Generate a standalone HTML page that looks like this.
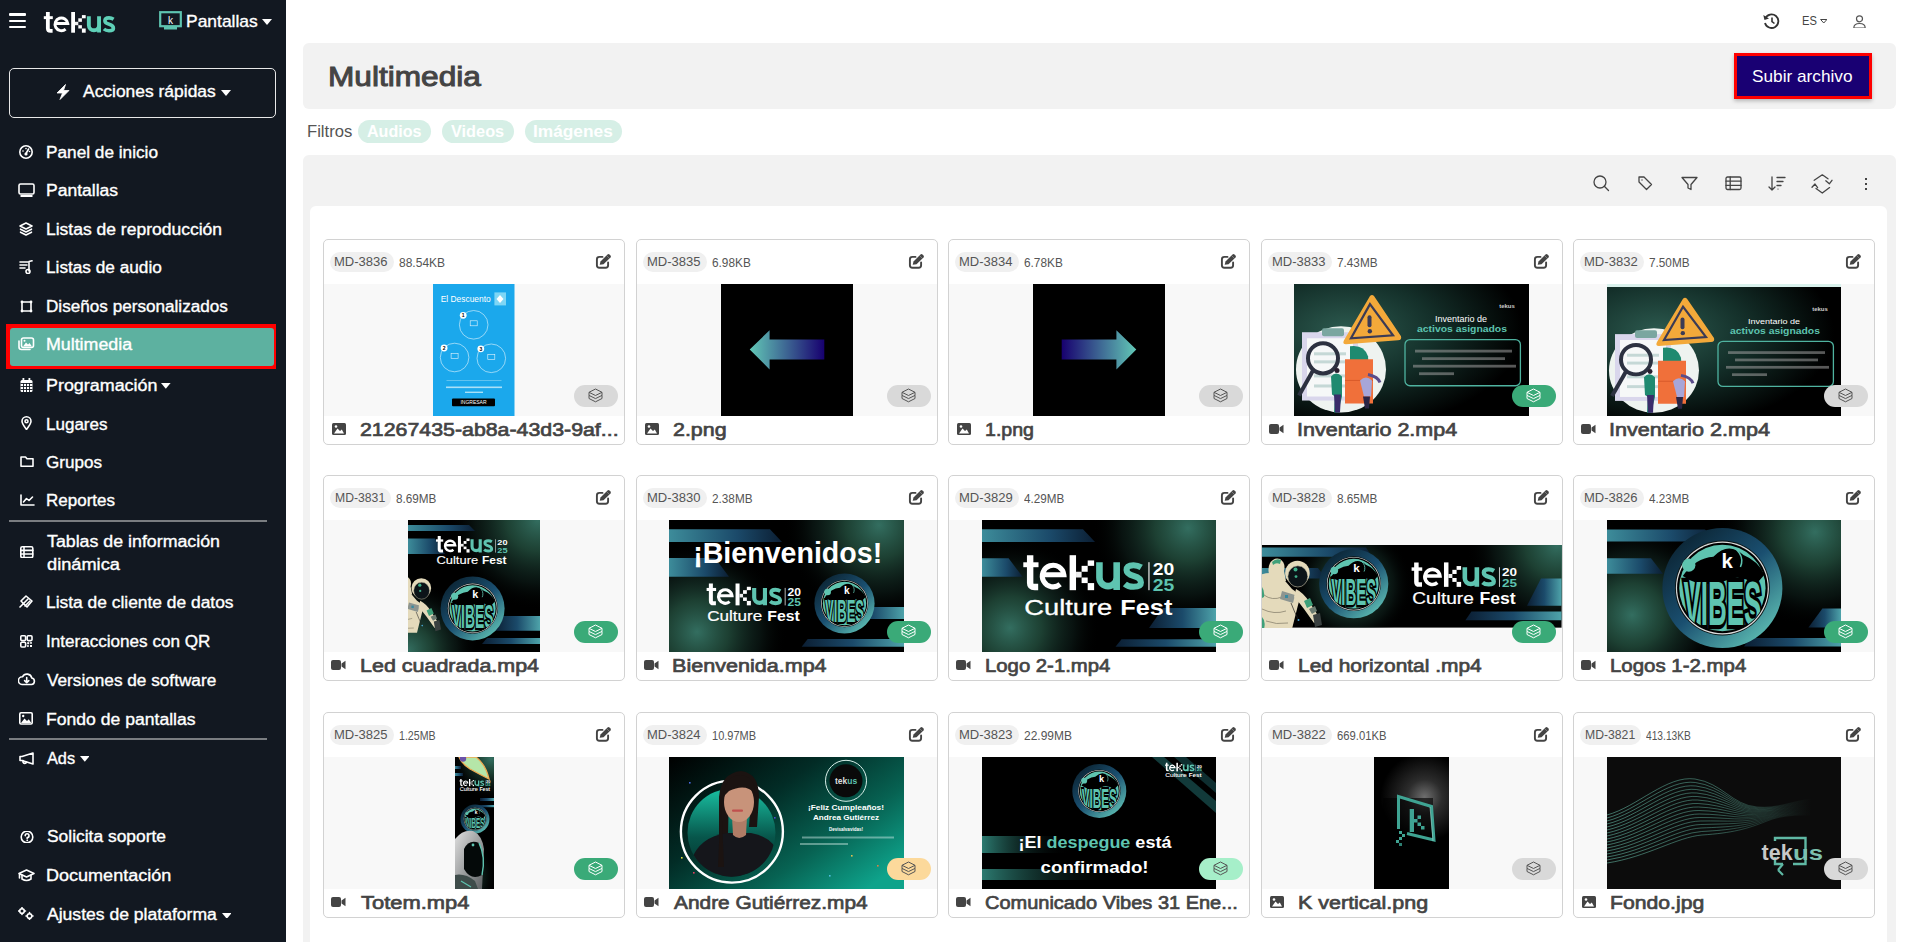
<!DOCTYPE html>
<html><head><meta charset="utf-8"><title>Multimedia</title>
<style>
html,body{margin:0;padding:0;width:1909px;height:942px;overflow:hidden;background:#fff;}
body{position:relative;font-family:"Liberation Sans",sans-serif;}
.t{position:absolute;line-height:1;white-space:nowrap;display:block;}
svg{display:block}
</style></head><body>
<div style="position:absolute;left:0px;top:0px;width:286px;height:942px;background:#121821"></div>
<div style="position:absolute;left:9px;top:13px;width:17px;height:2.6px;background:#fff;border-radius:1px"></div>
<div style="position:absolute;left:9px;top:19.5px;width:17px;height:2.6px;background:#fff;border-radius:1px"></div>
<div style="position:absolute;left:9px;top:25.5px;width:17px;height:2.6px;background:#fff;border-radius:1px"></div>
<svg style="position:absolute;left:40px;top:8px;" width="80" height="30" viewBox="0 0 80 30"><path d="M7.85 4 V20.5 Q7.85 22.8 10.5 22.8 H12.6" fill="none" stroke="#fff" stroke-width="3.8"/><rect x="3.8" y="8.2" width="9" height="2.9" fill="#fff"/><path d="M15.2 15.6 H27.8 A6.4 6.4 0 1 0 25.6 21.2" fill="none" stroke="#fff" stroke-width="3.0"/><rect x="31.2" y="4" width="3.8" height="20.7" fill="#fff"/><rect x="41.9" y="7.1" width="3.8" height="3.2" fill="#fff"/><rect x="38.3" y="10.3" width="3.6" height="3.5" fill="#fff"/><rect x="35" y="13.8" width="3.3" height="3.4" fill="#eee"/><rect x="38.3" y="17.2" width="3.6" height="3.3" fill="#fff"/><rect x="41.9" y="20.5" width="3.8" height="4.2" fill="#fff"/><path d="M48.85 8.2 V17.2 A5.1 5.1 0 0 0 59.05 17.2 M59.05 8.2 V24.6" fill="none" stroke="#5fd0b8" stroke-width="3.9"/><path d="M73.6 11.2 Q71.5 9.9 69 9.9 Q64.9 9.9 64.9 12.8 Q64.9 15.2 69.2 16.3 Q73.4 17.4 73.4 20.2 Q73.4 22.7 69 22.7 Q65.8 22.7 63.9 21" fill="none" stroke="#5fd0b8" stroke-width="3.6"/></svg>
<svg style="position:absolute;left:159px;top:11px;" width="23" height="19" viewBox="0 0 23 19"><rect x="1.2" y="1.2" width="20.6" height="14" fill="none" stroke="#5ec4b0" stroke-width="2.2"/><rect x="5" y="16" width="13" height="2.5" fill="#5ec4b0"/><text x="11.5" y="12.5" font-size="10" fill="#fff" text-anchor="middle" font-family="Liberation Sans">k</text></svg>
<span class="t" style="left:185.78px;top:13.00px;font-size:17.01px;color:#fff;font-weight:normal;transform:scaleX(1.0267);transform-origin:0 0;-webkit-text-stroke:0.35px #fff;">Pantallas</span>
<svg style="position:absolute;left:262px;top:19px;" width="10" height="6" viewBox="0 0 10 6"><path d="M0 0H10L5 6Z" fill="#fff"/></svg>
<div style="position:absolute;left:9px;top:68px;width:265px;height:48px;border:1.3px solid #e8e8e8;border-radius:5px"></div>
<svg style="position:absolute;left:56px;top:84px;" width="14" height="16" viewBox="0 0 14 16"><path d="M9.5 0.5 L1 9 H6.5 L4 15.5 L13 6.5 H7.5 Z" fill="#fff" stroke="#fff" stroke-width="0.8" stroke-linejoin="round"/></svg>
<span class="t" style="left:83.49px;top:83.33px;font-size:16.13px;color:#fff;font-weight:normal;transform:scaleX(1.0820);transform-origin:0 0;-webkit-text-stroke:0.35px #fff;">Acciones rápidas</span>
<svg style="position:absolute;left:221px;top:90px;" width="10" height="6" viewBox="0 0 10 6"><path d="M0 0H10L5 6Z" fill="#fff"/></svg>
<div style="position:absolute;left:6px;top:324px;width:270px;height:44.5px;background:#ff0000"></div>
<div style="position:absolute;left:9.5px;top:327.5px;width:264px;height:38px;background:#5db1a0;border-radius:3px"></div>
<span class="t" style="left:45.91px;top:145.10px;font-size:16.00px;color:#fff;font-weight:normal;transform:scaleX(1.0760);transform-origin:0 0;-webkit-text-stroke:0.35px #fff;">Panel de inicio</span>
<svg style="position:absolute;left:19.3px;top:145px;" width="14" height="14" viewBox="0 0 14 14"><circle cx="7" cy="7" r="6.2" fill="none" stroke="#fff" stroke-width="1.6" stroke-linecap="round" stroke-linejoin="round"/><path d="M7 8.5 L9.6 4" fill="none" stroke="#fff" stroke-width="1.6" stroke-linecap="round" stroke-linejoin="round"/><circle cx="7" cy="9" r="1.6" fill="#fff"/><circle cx="4" cy="6" r="0.8" fill="#fff"/><circle cx="7" cy="3.6" r="0.8" fill="#fff"/><circle cx="10.5" cy="6.5" r="0.8" fill="#fff"/></svg>
<span class="t" style="left:45.89px;top:183.00px;font-size:16.00px;color:#fff;font-weight:normal;transform:scaleX(1.0956);transform-origin:0 0;-webkit-text-stroke:0.35px #fff;">Pantallas</span>
<svg style="position:absolute;left:18px;top:183px;" width="17" height="14" viewBox="0 0 17 14"><rect x="1" y="1" width="15" height="10" rx="1.5" fill="none" stroke="#fff" stroke-width="1.6" stroke-linecap="round" stroke-linejoin="round"/><rect x="2.5" y="12" width="12" height="2" fill="#fff"/></svg>
<span class="t" style="left:45.89px;top:222.10px;font-size:16.00px;color:#fff;font-weight:normal;transform:scaleX(1.0932);transform-origin:0 0;-webkit-text-stroke:0.35px #fff;">Listas de reproducción</span>
<svg style="position:absolute;left:19.3px;top:222px;" width="14" height="14" viewBox="0 0 14 14"><path d="M7 1 L13 4 L7 7 L1 4 Z" fill="none" stroke="#fff" stroke-width="1.6" stroke-linecap="round" stroke-linejoin="round"/><path d="M1.5 7.2 L7 10 L12.5 7.2" fill="none" stroke="#fff" stroke-width="1.6" stroke-linecap="round" stroke-linejoin="round"/><path d="M1.5 10.2 L7 13 L12.5 10.2" fill="none" stroke="#fff" stroke-width="1.6" stroke-linecap="round" stroke-linejoin="round"/></svg>
<span class="t" style="left:45.91px;top:260.40px;font-size:16.00px;color:#fff;font-weight:normal;transform:scaleX(1.0761);transform-origin:0 0;-webkit-text-stroke:0.35px #fff;">Listas de audio</span>
<svg style="position:absolute;left:19.2px;top:260px;" width="14" height="14" viewBox="0 0 14 14"><path d="M1 2H9M1 5H8M1 8H6" fill="none" stroke="#fff" stroke-width="1.6" stroke-linecap="round" stroke-linejoin="round"/><path d="M10 11V1.5 L13 0.8" fill="none" stroke="#fff" stroke-width="1.6" stroke-linecap="round" stroke-linejoin="round"/><circle cx="9" cy="11.5" r="2" fill="none" stroke="#fff" stroke-width="1.6" stroke-linecap="round" stroke-linejoin="round"/></svg>
<span class="t" style="left:45.92px;top:299.30px;font-size:16.00px;color:#fff;font-weight:normal;transform:scaleX(1.0705);transform-origin:0 0;-webkit-text-stroke:0.35px #fff;">Diseños personalizados</span>
<svg style="position:absolute;left:19.5px;top:299.5px;" width="13" height="13" viewBox="0 0 13 13"><rect x="2" y="2" width="9" height="9" fill="none" stroke="#fff" stroke-width="1.6" stroke-linecap="round" stroke-linejoin="round"/><circle cx="2" cy="2" r="1.4" fill="#fff"/><circle cx="11" cy="2" r="1.4" fill="#fff"/><circle cx="2" cy="11" r="1.4" fill="#fff"/><circle cx="11" cy="11" r="1.4" fill="#fff"/></svg>
<span class="t" style="left:45.87px;top:337.00px;font-size:16.00px;color:#fff;font-weight:normal;transform:scaleX(1.1123);transform-origin:0 0;-webkit-text-stroke:0.35px #fff;">Multimedia</span>
<svg style="position:absolute;left:18px;top:337px;" width="17" height="14" viewBox="0 0 17 14"><path d="M1 4 V10 Q1 12.5 3.5 12.5 H12" fill="none" stroke="#fff" stroke-width="1.6" stroke-linecap="round" stroke-linejoin="round"/><rect x="3.5" y="1" width="12" height="9.5" rx="2" fill="none" stroke="#fff" stroke-width="1.6" stroke-linecap="round" stroke-linejoin="round"/><path d="M5 9.5 L8 5.5 L10 7.5 L11.5 6 L14 9.5Z" fill="#fff"/><circle cx="6.5" cy="3.8" r="1" fill="#fff"/></svg>
<span class="t" style="left:45.86px;top:378.30px;font-size:16.00px;color:#fff;font-weight:normal;transform:scaleX(1.1186);transform-origin:0 0;-webkit-text-stroke:0.35px #fff;">Programación</span>
<svg style="position:absolute;left:19.9px;top:378px;" width="13" height="14" viewBox="0 0 13 14"><rect x="0.5" y="2" width="12" height="12" rx="1.5" fill="#fff"/><rect x="2.5" y="0" width="1.8" height="3" fill="#fff"/><rect x="8.5" y="0" width="1.8" height="3" fill="#fff"/><path d="M0.5 5.5H12.5M0.5 8.5H12.5M0.5 11.5H12.5M3.5 5V14M6.5 5V14M9.5 5V14" stroke="#121821" stroke-width="0.9"/></svg>
<span class="t" style="left:45.93px;top:416.60px;font-size:16.00px;color:#fff;font-weight:normal;transform:scaleX(1.0630);transform-origin:0 0;-webkit-text-stroke:0.35px #fff;">Lugares</span>
<svg style="position:absolute;left:20.8px;top:416.2px;" width="11" height="14" viewBox="0 0 11 14"><path d="M5.5 13.5 C2 9 1 7.5 1 5.3 A4.5 4.5 0 0 1 10 5.3 C10 7.5 9 9 5.5 13.5Z" fill="none" stroke="#fff" stroke-width="1.6" stroke-linecap="round" stroke-linejoin="round"/><circle cx="5.5" cy="5.3" r="1.5" fill="none" stroke="#fff" stroke-width="1.6" stroke-linecap="round" stroke-linejoin="round"/></svg>
<span class="t" style="left:46.43px;top:454.80px;font-size:16.00px;color:#fff;font-weight:normal;transform:scaleX(1.0666);transform-origin:0 0;-webkit-text-stroke:0.35px #fff;">Grupos</span>
<svg style="position:absolute;left:19.6px;top:455px;" width="14" height="13" viewBox="0 0 14 13"><path d="M1 2 H5.5 L7 3.8 H13 V11.2 H1 Z" fill="none" stroke="#fff" stroke-width="1.6" stroke-linecap="round" stroke-linejoin="round"/></svg>
<span class="t" style="left:45.92px;top:493.10px;font-size:16.00px;color:#fff;font-weight:normal;transform:scaleX(1.0635);transform-origin:0 0;-webkit-text-stroke:0.35px #fff;">Reportes</span>
<svg style="position:absolute;left:19.6px;top:494px;" width="15" height="12" viewBox="0 0 15 12"><path d="M1 1V11H14" fill="none" stroke="#fff" stroke-width="1.6" stroke-linecap="round" stroke-linejoin="round"/><path d="M3.5 8 L6.5 4.5 L9 6.5 L12.5 3" fill="none" stroke="#fff" stroke-width="1.6" stroke-linecap="round" stroke-linejoin="round"/></svg>
<span class="t" style="left:46.94px;top:534.40px;font-size:16.00px;color:#fff;font-weight:normal;transform:scaleX(1.1114);transform-origin:0 0;-webkit-text-stroke:0.35px #fff;">Tablas de información</span>
<span class="t" style="left:46.57px;top:556.90px;font-size:16.00px;color:#fff;font-weight:normal;transform:scaleX(1.1381);transform-origin:0 0;-webkit-text-stroke:0.35px #fff;">dinámica</span>
<svg style="position:absolute;left:19.5px;top:545.8px;" width="14" height="12.5" viewBox="0 0 14 12.5"><rect x="0.8" y="0.8" width="12" height="10.8" rx="1.5" fill="none" stroke="#fff" stroke-width="1.6" stroke-linecap="round" stroke-linejoin="round"/><path d="M0.8 4.4H12.8M0.8 8H12.8M4 1V11.5" fill="none" stroke="#fff" stroke-width="1.6" stroke-linecap="round" stroke-linejoin="round"/></svg>
<span class="t" style="left:45.90px;top:595.30px;font-size:16.00px;color:#fff;font-weight:normal;transform:scaleX(1.0867);transform-origin:0 0;-webkit-text-stroke:0.35px #fff;">Lista de cliente de datos</span>
<svg style="position:absolute;left:19.3px;top:595.3px;" width="14" height="14" viewBox="0 0 14 14"><path d="M2 6 L7 1 L13 6 L8 12 Z" fill="none" stroke="#fff" stroke-width="1.6" stroke-linecap="round" stroke-linejoin="round"/><path d="M4 9 L9 4 M6 11 L11 6" fill="none" stroke="#fff" stroke-width="1.6" stroke-linecap="round" stroke-linejoin="round"/><path d="M1 12 L4 9" fill="none" stroke="#fff" stroke-width="1.6" stroke-linecap="round" stroke-linejoin="round"/></svg>
<span class="t" style="left:45.75px;top:634.40px;font-size:16.00px;color:#fff;font-weight:normal;transform:scaleX(1.0683);transform-origin:0 0;-webkit-text-stroke:0.35px #fff;">Interacciones con QR</span>
<svg style="position:absolute;left:19.9px;top:635.2px;" width="13" height="13" viewBox="0 0 13 13"><rect x="0.8" y="0.8" width="4.8" height="4.8" rx="1" fill="none" stroke="#fff" stroke-width="1.6" stroke-linecap="round" stroke-linejoin="round"/><rect x="7.2" y="0.8" width="4.8" height="4.8" rx="1" fill="none" stroke="#fff" stroke-width="1.6" stroke-linecap="round" stroke-linejoin="round"/><rect x="0.8" y="7.2" width="4.8" height="4.8" rx="1" fill="none" stroke="#fff" stroke-width="1.6" stroke-linecap="round" stroke-linejoin="round"/><rect x="7.2" y="7.2" width="2" height="2" fill="#fff"/><rect x="10" y="10" width="2" height="2" fill="#fff"/><rect x="7.2" y="10" width="1.5" height="2" fill="#fff"/><rect x="10" y="7.2" width="2" height="1.5" fill="#fff"/></svg>
<span class="t" style="left:47.29px;top:672.60px;font-size:16.00px;color:#fff;font-weight:normal;transform:scaleX(1.0748);transform-origin:0 0;-webkit-text-stroke:0.35px #fff;">Versiones de software</span>
<svg style="position:absolute;left:17.6px;top:673px;" width="18" height="13" viewBox="0 0 18 13"><path d="M4 11.5 H13.5 A3.3 3.3 0 0 0 13.8 5 A5 5 0 0 0 4.5 3.8 A3.8 3.8 0 0 0 4 11.5Z" fill="none" stroke="#fff" stroke-width="1.6" stroke-linecap="round" stroke-linejoin="round"/><path d="M8.7 4.5V9.5M6.6 7.6L8.7 9.7L10.8 7.6" fill="none" stroke="#fff" stroke-width="1.6" stroke-linecap="round" stroke-linejoin="round"/></svg>
<span class="t" style="left:45.89px;top:711.70px;font-size:16.00px;color:#fff;font-weight:normal;transform:scaleX(1.0989);transform-origin:0 0;-webkit-text-stroke:0.35px #fff;">Fondo de pantallas</span>
<svg style="position:absolute;left:19.3px;top:711.6px;" width="14" height="13" viewBox="0 0 14 13"><rect x="0.8" y="0.8" width="12.4" height="11.2" rx="1.2" fill="none" stroke="#fff" stroke-width="1.6" stroke-linecap="round" stroke-linejoin="round"/><path d="M2 11 L5.5 6.5 L8 9 L9.8 7.3 L12.3 11Z" fill="#fff"/><circle cx="4.2" cy="4" r="1.2" fill="#fff"/></svg>
<span class="t" style="left:47.28px;top:751.30px;font-size:16.00px;color:#fff;font-weight:normal;transform:scaleX(1.0186);transform-origin:0 0;-webkit-text-stroke:0.35px #fff;">Ads</span>
<svg style="position:absolute;left:18.5px;top:752px;" width="15" height="13" viewBox="0 0 15 13"><path d="M1 4.5 V8.5 H3 L14 12 V1 L3 4.5 Z" fill="none" stroke="#fff" stroke-width="1.6" stroke-linecap="round" stroke-linejoin="round"/><path d="M4 8.5 V10 A1.8 1.8 0 0 0 7.5 10" fill="none" stroke="#fff" stroke-width="1.6" stroke-linecap="round" stroke-linejoin="round"/></svg>
<span class="t" style="left:46.51px;top:829.30px;font-size:16.00px;color:#fff;font-weight:normal;transform:scaleX(1.0881);transform-origin:0 0;-webkit-text-stroke:0.35px #fff;">Solicita soporte</span>
<svg style="position:absolute;left:19.5px;top:830.5px;" width="14" height="12.5" viewBox="0 0 14 12.5"><circle cx="7" cy="6" r="5.8" fill="none" stroke="#fff" stroke-width="1.6" stroke-linecap="round" stroke-linejoin="round"/><path d="M5.2 4.6 A1.9 1.9 0 1 1 7.2 6.6 V7.6" fill="none" stroke="#fff" stroke-width="1.6" stroke-linecap="round" stroke-linejoin="round"/><circle cx="7.2" cy="9.3" r="0.9" fill="#fff"/></svg>
<span class="t" style="left:45.85px;top:868.40px;font-size:16.00px;color:#fff;font-weight:normal;transform:scaleX(1.1270);transform-origin:0 0;-webkit-text-stroke:0.35px #fff;">Documentación</span>
<svg style="position:absolute;left:18px;top:869px;" width="17" height="13" viewBox="0 0 17 13"><path d="M1 4.5 L8.5 1 L16 4.5 L8.5 8 Z" fill="none" stroke="#fff" stroke-width="1.6" stroke-linecap="round" stroke-linejoin="round"/><path d="M4 6 V10 Q8.5 13 13 10 V6" fill="none" stroke="#fff" stroke-width="1.6" stroke-linecap="round" stroke-linejoin="round"/><path d="M1.5 4.8 V9" fill="none" stroke="#fff" stroke-width="1.6" stroke-linecap="round" stroke-linejoin="round"/></svg>
<span class="t" style="left:47.29px;top:906.60px;font-size:16.00px;color:#fff;font-weight:normal;transform:scaleX(1.0970);transform-origin:0 0;-webkit-text-stroke:0.35px #fff;">Ajustes de plataforma</span>
<svg style="position:absolute;left:18px;top:907px;" width="16" height="13" viewBox="0 0 16 13"><circle cx="4" cy="4" r="2.3" fill="none" stroke="#fff" stroke-width="1.6" stroke-linecap="round" stroke-linejoin="round"/><circle cx="11.5" cy="9" r="2.3" fill="none" stroke="#fff" stroke-width="1.6" stroke-linecap="round" stroke-linejoin="round"/><path d="M4 0.5V1.5M4 6.5V7.5M0.5 4H1.5M6.5 4H7.5M11.5 5.5V6.5M11.5 11.5V12.5M8 9H9M14 9H15" fill="none" stroke="#fff" stroke-width="1.6" stroke-linecap="round" stroke-linejoin="round"/></svg>
<svg style="position:absolute;left:161.2px;top:383.2px;" width="9.6" height="5.8" viewBox="0 0 9.6 5.8"><path d="M0 0H9.6L4.8 5.8Z" fill="#fff"/></svg>
<svg style="position:absolute;left:79.7px;top:756px;" width="9.6" height="5.8" viewBox="0 0 9.6 5.8"><path d="M0 0H9.6L4.8 5.8Z" fill="#fff"/></svg>
<svg style="position:absolute;left:221.5px;top:912.5px;" width="9.6" height="5.8" viewBox="0 0 9.6 5.8"><path d="M0 0H9.6L4.8 5.8Z" fill="#fff"/></svg>
<div style="position:absolute;left:9px;top:520px;width:258px;height:2px;background:#7a7d81"></div>
<div style="position:absolute;left:9px;top:738px;width:258px;height:2px;background:#7a7d81"></div>
<svg style="position:absolute;left:1763px;top:12.5px;" width="17" height="16" viewBox="0 0 17 16"><path d="M2.3 5.5 A6.8 6.8 0 1 1 2 10" fill="none" stroke="#333" stroke-width="1.8"/><path d="M0.3 2 L1.5 7 L6 5.5Z" fill="#333"/><path d="M9 4.5V8.5L11.5 10.5" fill="none" stroke="#333" stroke-width="1.6"/></svg>
<span class="t" style="left:1802.11px;top:14.47px;font-size:13.66px;color:#444;font-weight:normal;transform:scaleX(0.8166);transform-origin:0 0;">ES</span>
<svg style="position:absolute;left:1819.5px;top:19px;" width="7.5" height="4.5" viewBox="0 0 7.5 4.5"><path d="M0.6 0.5H6.9L3.75 4Z" fill="none" stroke="#444" stroke-width="1"/></svg>
<svg style="position:absolute;left:1853px;top:14.5px;" width="13" height="13.5" viewBox="0 0 13 13.5"><circle cx="6.5" cy="3.8" r="3" fill="none" stroke="#555" stroke-width="1.2"/><path d="M0.8 13 Q0.8 8.5 6.5 8.5 Q12.2 8.5 12.2 13Z" fill="none" stroke="#555" stroke-width="1.2"/></svg>
<div style="position:absolute;left:303px;top:43px;width:1593px;height:65.5px;background:#f2f2f2;border-radius:6px"></div>
<span class="t" style="left:328.34px;top:62.62px;font-size:27.76px;color:#444;font-weight:normal;transform:scaleX(1.1394);transform-origin:0 0;-webkit-text-stroke:1.00px #444;">Multimedia</span>
<div style="position:absolute;left:1733.5px;top:52.5px;width:138px;height:46px;background:#ff0000;box-shadow:0 2px 4px rgba(0,0,0,.25)"></div>
<div style="position:absolute;left:1736.5px;top:55.5px;width:132px;height:40px;background:#190073"></div>
<span class="t" style="left:1752.23px;top:68.51px;font-size:15.99px;color:#fff;font-weight:normal;transform:scaleX(1.0769);transform-origin:0 0;">Subir archivo</span>
<span class="t" style="left:307.37px;top:124.21px;font-size:15.99px;color:#555;font-weight:normal;transform:scaleX(1.0396);transform-origin:0 0;">Filtros</span>
<div style="position:absolute;left:358px;top:120px;width:73px;height:22.5px;background:#d6efe6;border-radius:12px"></div>
<div style="position:absolute;left:442px;top:120px;width:72px;height:22.5px;background:#d6efe6;border-radius:12px"></div>
<div style="position:absolute;left:525px;top:120px;width:97px;height:22.5px;background:#d6efe6;border-radius:12px"></div>
<span class="t" style="left:367.10px;top:124.21px;font-size:15.99px;color:#fff;font-weight:bold;transform:scaleX(1.0049);transform-origin:0 0;">Audios</span>
<span class="t" style="left:451.42px;top:124.21px;font-size:15.99px;color:#fff;font-weight:bold;transform:scaleX(1.0198);transform-origin:0 0;">Videos</span>
<span class="t" style="left:532.88px;top:124.21px;font-size:15.99px;color:#fff;font-weight:bold;transform:scaleX(1.0817);transform-origin:0 0;">Imágenes</span>
<div style="position:absolute;left:303px;top:154.5px;width:1593px;height:800px;background:#f2f2f2;border-radius:6px"></div>
<div style="position:absolute;left:310px;top:206px;width:1577px;height:750px;background:#fff;border-radius:6px"></div>
<svg style="position:absolute;left:1593px;top:175px;" width="17" height="17" viewBox="0 0 17 17"><circle cx="7" cy="7" r="6" fill="none" stroke="#444" stroke-width="1.3" stroke-linecap="round" stroke-linejoin="round"/><path d="M11.3 11.3 L15.5 15.5" fill="none" stroke="#444" stroke-width="1.3" stroke-linecap="round" stroke-linejoin="round"/></svg>
<svg style="position:absolute;left:1638px;top:176px;" width="15" height="15" viewBox="0 0 15 15"><path d="M1 1 H6 L13.5 8.5 L8.5 13.5 L1 6 Z" fill="none" stroke="#444" stroke-width="1.3" stroke-linecap="round" stroke-linejoin="round"/><circle cx="4" cy="4" r="0.7" fill="#444"/></svg>
<svg style="position:absolute;left:1681px;top:176px;" width="17" height="15" viewBox="0 0 17 15"><path d="M1 1.5 H16 L10 8.5 V13.5 L7 12 V8.5 Z" fill="none" stroke="#444" stroke-width="1.3" stroke-linecap="round" stroke-linejoin="round"/></svg>
<svg style="position:absolute;left:1725px;top:176px;" width="17" height="15" viewBox="0 0 17 15"><rect x="1" y="1" width="15" height="12.5" rx="1.5" fill="none" stroke="#444" stroke-width="1.3" stroke-linecap="round" stroke-linejoin="round"/><path d="M1 5.2H16M1 9.4H16M5.2 1V13.5" fill="none" stroke="#444" stroke-width="1.3" stroke-linecap="round" stroke-linejoin="round"/></svg>
<svg style="position:absolute;left:1768px;top:176px;" width="20" height="16" viewBox="0 0 20 16"><path d="M4 1 V14 M1 11 L4 14 L7 11" fill="none" stroke="#444" stroke-width="1.3" stroke-linecap="round" stroke-linejoin="round"/><path d="M9 1.5H17M9 5.5H15M9 9.5H13" fill="none" stroke="#444" stroke-width="1.3" stroke-linecap="round" stroke-linejoin="round"/><path d="M9 13.2H11" stroke="#aaa" stroke-width="1.3"/></svg>
<svg style="position:absolute;left:1811px;top:174px;" width="23" height="20" viewBox="0 0 23 20"><path d="M3.2 6.3 L11.3 0.8 L17 4.8" fill="none" stroke="#444" stroke-width="1.3" stroke-linecap="round" stroke-linejoin="round"/><path d="M18.6 13.6 L11.3 19 L5 14.5" fill="none" stroke="#444" stroke-width="1.3" stroke-linecap="round" stroke-linejoin="round"/><path d="M14.8 6.8 L18.3 9.8 L21 6.3" fill="none" stroke="#444" stroke-width="1.3" stroke-linecap="round" stroke-linejoin="round"/><path d="M1 13.3 L4 10 L6.6 13.7" fill="none" stroke="#444" stroke-width="1.3" stroke-linecap="round" stroke-linejoin="round"/></svg>
<div style="position:absolute;left:1864.8px;top:178px;width:2.4px;height:2.4px;background:#444"></div>
<div style="position:absolute;left:1864.8px;top:183px;width:2.4px;height:2.4px;background:#444"></div>
<div style="position:absolute;left:1864.8px;top:187.5px;width:2.4px;height:2.4px;background:#444"></div>
<div style="position:absolute;left:323px;top:239px;width:302px;height:206px;box-sizing:border-box;border:1px solid #d2d2d2;border-radius:5px;background:#fff"></div>
<div style="position:absolute;left:324px;top:283.5px;width:300px;height:132px;background:#f8f8f8"></div>
<svg style="position:absolute;left:433px;top:284px;overflow:hidden" width="81.5" height="132" viewBox="0 0 81.5 132"><rect width="81.5" height="132" fill="#1ba8ec"/><text x="7.7" y="18" font-size="9" fill="#fff" font-family="Liberation Sans" textLength="50" lengthAdjust="spacingAndGlyphs">El Descuento</text><rect x="61.4" y="8.4" width="11.6" height="13" fill="#7fd6f5"/><path d="M67 11 L70.5 15 L67 19 L63.5 15Z" fill="#fff"/><circle cx="40.7" cy="40.8" r="14.3" fill="none" stroke="#e8f6fd" stroke-width="0.6"/><circle cx="30.200000000000003" cy="31.299999999999997" r="3.4" fill="#fff"/><text x="30.200000000000003" y="33.199999999999996" font-size="5" font-weight="bold" fill="#000" text-anchor="middle" font-family="Liberation Sans">1</text><rect x="37.2" y="36.8" width="7" height="5" fill="none" stroke="#e8f6fd" stroke-width="0.6"/><circle cx="21.6" cy="73.5" r="14.3" fill="none" stroke="#e8f6fd" stroke-width="0.6"/><circle cx="11.100000000000001" cy="64.0" r="3.4" fill="#fff"/><text x="11.100000000000001" y="65.9" font-size="5" font-weight="bold" fill="#000" text-anchor="middle" font-family="Liberation Sans">2</text><rect x="18.1" y="69.5" width="7" height="5" fill="none" stroke="#e8f6fd" stroke-width="0.6"/><circle cx="58.3" cy="74.3" r="14.3" fill="none" stroke="#e8f6fd" stroke-width="0.6"/><circle cx="47.8" cy="64.8" r="3.4" fill="#fff"/><text x="47.8" y="66.7" font-size="5" font-weight="bold" fill="#000" text-anchor="middle" font-family="Liberation Sans">3</text><rect x="54.8" y="70.3" width="7" height="5" fill="none" stroke="#e8f6fd" stroke-width="0.6"/><rect x="13.5" y="96" width="55" height="0.6" fill="#8fd5f3"/><rect x="13" y="102.5" width="56" height="1.6" fill="#a9e0f7"/><rect x="32" y="107.6" width="18" height="1.4" fill="#a9e0f7"/><rect x="19" y="114.5" width="43" height="7.7" rx="1" fill="#000"/><text x="40.5" y="120.2" font-size="5" fill="#fff" text-anchor="middle" font-family="Liberation Sans">INGRESAR</text></svg>
<div style="position:absolute;left:330.4px;top:252px;width:63.6px;height:20px;background:#f0f0f0;border-radius:10px"></div>
<span class="t" style="left:334.46px;top:256.05px;font-size:12.50px;color:#555;font-weight:normal;transform:scaleX(1.0426);transform-origin:0 0;">MD-3836</span>
<span class="t" style="left:398.92px;top:257.20px;font-size:12.60px;color:#555;font-weight:normal;transform:scaleX(0.9537);transform-origin:0 0;">88.54KB</span>
<svg style="position:absolute;left:596px;top:254px;overflow:visible" width="16" height="16" viewBox="0 0 16 16"><path d="M6.5 2.9 H3.4 Q0.9 2.9 0.9 5.4 V11.3 Q0.9 13.8 3.4 13.8 H9.6 Q12.1 13.8 12.1 11.3 V8.4" fill="none" stroke="#444" stroke-width="1.9" stroke-linecap="round"/><path d="M3.7 10.7 L4.5 7.5 L11.5 0.5 Q12.5 -0.3 13.5 0.5 L14.5 1.5 Q15.3 2.5 14.5 3.5 L7.5 10.3 Z" fill="#444"/><path d="M10.6 1.6 L13.4 4.4" stroke="#fff" stroke-width="0.5" opacity="0.6"/></svg>
<div style="position:absolute;left:574px;top:385px;width:44px;height:22px;background:#d9d9d9;border-radius:11px"></div>
<svg style="position:absolute;left:574px;top:385px;" width="44" height="22" viewBox="0 0 44 22"><path d="M15 7.3 L21.5 4 L28 7.3 L21.5 10.5 Z M15 7.3 V10.4 L21.5 13.6 L28 10.4 V7.3 M15 10.4 V13.5 L21.5 16.8 L28 13.5 V10.4" fill="none" stroke="#555" stroke-width="1" stroke-linejoin="round"/></svg>
<svg style="position:absolute;left:331.5px;top:422.5px;" width="14" height="12" viewBox="0 0 14 12"><rect x="0" y="0" width="14" height="12" rx="1.5" fill="#444"/><path d="M2 10.5 L5.5 5.5 L8 8 L9.8 6.5 L12 10.5Z" fill="#fff"/><circle cx="4" cy="3.5" r="1.3" fill="#fff"/></svg>
<span class="t" style="left:360.33px;top:420.85px;font-size:18.90px;color:#444;font-weight:normal;transform:scaleX(1.1293);transform-origin:0 0;-webkit-text-stroke:0.70px #444;">21267435-ab8a-43d3-9af...</span>
<div style="position:absolute;left:636px;top:239px;width:302px;height:206px;box-sizing:border-box;border:1px solid #d2d2d2;border-radius:5px;background:#fff"></div>
<div style="position:absolute;left:637px;top:283.5px;width:300px;height:132px;background:#f8f8f8"></div>
<svg style="position:absolute;left:721px;top:284px;overflow:hidden" width="132" height="132" viewBox="0 0 132 132"><defs><linearGradient id="g2_a" x1="0" x2="1"><stop offset="0" stop-color="#62c8b6"/><stop offset="1" stop-color="#17006f"/></linearGradient></defs><rect width="132" height="132" fill="#000"/><path d="M28.7 65.4 L48.6 46.3 V55.6 H103.3 V75.5 H48.6 V85.5Z" fill="url(#g2_a)"/></svg>
<div style="position:absolute;left:643.4px;top:252px;width:63.6px;height:20px;background:#f0f0f0;border-radius:10px"></div>
<span class="t" style="left:647.46px;top:256.05px;font-size:12.50px;color:#555;font-weight:normal;transform:scaleX(1.0426);transform-origin:0 0;">MD-3835</span>
<span class="t" style="left:711.81px;top:257.20px;font-size:12.60px;color:#555;font-weight:normal;transform:scaleX(0.9384);transform-origin:0 0;">6.98KB</span>
<svg style="position:absolute;left:909px;top:254px;overflow:visible" width="16" height="16" viewBox="0 0 16 16"><path d="M6.5 2.9 H3.4 Q0.9 2.9 0.9 5.4 V11.3 Q0.9 13.8 3.4 13.8 H9.6 Q12.1 13.8 12.1 11.3 V8.4" fill="none" stroke="#444" stroke-width="1.9" stroke-linecap="round"/><path d="M3.7 10.7 L4.5 7.5 L11.5 0.5 Q12.5 -0.3 13.5 0.5 L14.5 1.5 Q15.3 2.5 14.5 3.5 L7.5 10.3 Z" fill="#444"/><path d="M10.6 1.6 L13.4 4.4" stroke="#fff" stroke-width="0.5" opacity="0.6"/></svg>
<div style="position:absolute;left:887px;top:385px;width:44px;height:22px;background:#d9d9d9;border-radius:11px"></div>
<svg style="position:absolute;left:887px;top:385px;" width="44" height="22" viewBox="0 0 44 22"><path d="M15 7.3 L21.5 4 L28 7.3 L21.5 10.5 Z M15 7.3 V10.4 L21.5 13.6 L28 10.4 V7.3 M15 10.4 V13.5 L21.5 16.8 L28 13.5 V10.4" fill="none" stroke="#555" stroke-width="1" stroke-linejoin="round"/></svg>
<svg style="position:absolute;left:644.5px;top:422.5px;" width="14" height="12" viewBox="0 0 14 12"><rect x="0" y="0" width="14" height="12" rx="1.5" fill="#444"/><path d="M2 10.5 L5.5 5.5 L8 8 L9.8 6.5 L12 10.5Z" fill="#fff"/><circle cx="4" cy="3.5" r="1.3" fill="#fff"/></svg>
<span class="t" style="left:672.83px;top:420.85px;font-size:18.90px;color:#444;font-weight:normal;transform:scaleX(1.1336);transform-origin:0 0;-webkit-text-stroke:0.70px #444;">2.png</span>
<div style="position:absolute;left:948px;top:239px;width:302px;height:206px;box-sizing:border-box;border:1px solid #d2d2d2;border-radius:5px;background:#fff"></div>
<div style="position:absolute;left:949px;top:283.5px;width:300px;height:132px;background:#f8f8f8"></div>
<svg style="position:absolute;left:1033px;top:284px;overflow:hidden" width="132" height="132" viewBox="0 0 132 132"><defs><linearGradient id="g3_a" x1="0" x2="1"><stop offset="0" stop-color="#62c8b6"/><stop offset="1" stop-color="#17006f"/></linearGradient></defs><rect width="132" height="132" fill="#000"/><g transform="translate(132 0) scale(-1 1)"><path d="M28.7 65.4 L48.6 46.3 V55.6 H103.3 V75.5 H48.6 V85.5Z" fill="url(#g3_a)"/></g></svg>
<div style="position:absolute;left:955.4px;top:252px;width:63.6px;height:20px;background:#f0f0f0;border-radius:10px"></div>
<span class="t" style="left:959.46px;top:256.05px;font-size:12.50px;color:#555;font-weight:normal;transform:scaleX(1.0387);transform-origin:0 0;">MD-3834</span>
<span class="t" style="left:1023.81px;top:257.20px;font-size:12.60px;color:#555;font-weight:normal;transform:scaleX(0.9384);transform-origin:0 0;">6.78KB</span>
<svg style="position:absolute;left:1221px;top:254px;overflow:visible" width="16" height="16" viewBox="0 0 16 16"><path d="M6.5 2.9 H3.4 Q0.9 2.9 0.9 5.4 V11.3 Q0.9 13.8 3.4 13.8 H9.6 Q12.1 13.8 12.1 11.3 V8.4" fill="none" stroke="#444" stroke-width="1.9" stroke-linecap="round"/><path d="M3.7 10.7 L4.5 7.5 L11.5 0.5 Q12.5 -0.3 13.5 0.5 L14.5 1.5 Q15.3 2.5 14.5 3.5 L7.5 10.3 Z" fill="#444"/><path d="M10.6 1.6 L13.4 4.4" stroke="#fff" stroke-width="0.5" opacity="0.6"/></svg>
<div style="position:absolute;left:1199px;top:385px;width:44px;height:22px;background:#d9d9d9;border-radius:11px"></div>
<svg style="position:absolute;left:1199px;top:385px;" width="44" height="22" viewBox="0 0 44 22"><path d="M15 7.3 L21.5 4 L28 7.3 L21.5 10.5 Z M15 7.3 V10.4 L21.5 13.6 L28 10.4 V7.3 M15 10.4 V13.5 L21.5 16.8 L28 13.5 V10.4" fill="none" stroke="#555" stroke-width="1" stroke-linejoin="round"/></svg>
<svg style="position:absolute;left:956.5px;top:422.5px;" width="14" height="12" viewBox="0 0 14 12"><rect x="0" y="0" width="14" height="12" rx="1.5" fill="#444"/><path d="M2 10.5 L5.5 5.5 L8 8 L9.8 6.5 L12 10.5Z" fill="#fff"/><circle cx="4" cy="3.5" r="1.3" fill="#fff"/></svg>
<span class="t" style="left:984.89px;top:420.85px;font-size:18.90px;color:#444;font-weight:normal;transform:scaleX(1.0353);transform-origin:0 0;-webkit-text-stroke:0.70px #444;">1.png</span>
<div style="position:absolute;left:1261px;top:239px;width:302px;height:206px;box-sizing:border-box;border:1px solid #d2d2d2;border-radius:5px;background:#fff"></div>
<div style="position:absolute;left:1262px;top:283.5px;width:300px;height:132px;background:#f8f8f8"></div>
<svg style="position:absolute;left:1294px;top:284px;overflow:hidden" width="235" height="132" viewBox="0 0 235 132"><defs><radialGradient id="g4_r" cx="0.22" cy="0.35" r="0.75"><stop offset="0" stop-color="#2c5a4f"/><stop offset="0.5" stop-color="#14302a"/><stop offset="1" stop-color="#000"/></radialGradient></defs><rect width="235" height="132" fill="url(#g4_r)"/><g transform="scale(1 1.0046)"><ellipse cx="47" cy="85" rx="45" ry="43" fill="#eef3f0"/><rect x="8" y="48" width="56" height="68" fill="#d9d6ec"/><rect x="13" y="54" width="46" height="58" fill="#f6f8f8"/><rect x="28" y="44" width="22" height="8" rx="2" fill="#7aa6a0"/><rect x="20" y="68" width="32" height="3" fill="#c5d8d6"/><rect x="20" y="76" width="32" height="3" fill="#c5d8d6"/><rect x="20" y="90" width="32" height="3" fill="#c5d8d6"/><rect x="20" y="100" width="32" height="3" fill="#c5d8d6"/><path d="M56 62 Q70 60 74 72 Q76 86 68 92 L56 92Z" fill="#1f8a70"/><circle cx="29" cy="74" r="15" fill="none" stroke="#2c3140" stroke-width="4"/><path d="M19 86 L5 111" stroke="#2c3140" stroke-width="4"/><path d="M51 75 H79 V119 H51Z" fill="#f0703a"/><path d="M51 96 H79" stroke="#d95a2a" stroke-width="1"/><path d="M76 12 Q78 10 80 12 L107 52 Q108 56 104 56 L52 60 Q48 60 50 56Z" fill="#f3a93a"/><path d="M76 20 L99 51 L57 54Z" fill="none" stroke="#3b3b55" stroke-width="2.2"/><rect x="73.5" y="31" width="4" height="12" rx="2" fill="#3b3b55"/><circle cx="75.8" cy="47" r="2.2" fill="#3b3b55"/><path d="M37 92 Q42 86 48 92 L48 112 L44 128 L40 128 L41 112 L38 110Z" fill="#1f8a70"/><path d="M40 110 L47 110 L46 128 L41 128Z" fill="#3a2c6a"/><circle cx="43" cy="86" r="2.5" fill="#2a2030"/><path d="M66 96 Q72 90 78 96 L77 112 L70 112Z" fill="#a7a6d8"/><path d="M69 112 L76 112 L75 124 L71 124Z" fill="#2a2545"/><path d="M74 90 Q84 92 86 98" stroke="#5a4c8a" stroke-width="3" fill="none"/><text x="167" y="38" font-size="8.2" fill="#fff" text-anchor="middle" font-family="Liberation Sans" textLength="52" lengthAdjust="spacingAndGlyphs">Inventario de</text><text x="168" y="47.5" font-size="9.2" font-weight="bold" fill="#5ec4b0" text-anchor="middle" font-family="Liberation Sans" textLength="90" lengthAdjust="spacingAndGlyphs">activos asignados</text><rect x="111" y="55.3" width="115.4" height="46" rx="5" fill="none" stroke="#4fb3a0" stroke-width="1.3"/><rect x="121" y="65.4" width="97" height="2.8" fill="#a0a0a0" opacity="0.55"/><rect x="128" y="72.9" width="83" height="2.8" fill="#a0a0a0" opacity="0.55"/><rect x="119" y="80.4" width="103" height="2.8" fill="#a0a0a0" opacity="0.55"/><rect x="125" y="87.9" width="35" height="2.8" fill="#a0a0a0" opacity="0.55"/><text x="213" y="24" font-size="6" font-weight="bold" fill="#ccc" text-anchor="middle" font-family="Liberation Sans">tekus</text></g></svg>
<div style="position:absolute;left:1268.4px;top:252px;width:63.6px;height:20px;background:#f0f0f0;border-radius:10px"></div>
<span class="t" style="left:1272.46px;top:256.05px;font-size:12.50px;color:#555;font-weight:normal;transform:scaleX(1.0426);transform-origin:0 0;">MD-3833</span>
<span class="t" style="left:1336.81px;top:257.20px;font-size:12.60px;color:#555;font-weight:normal;transform:scaleX(0.9348);transform-origin:0 0;">7.43MB</span>
<svg style="position:absolute;left:1534px;top:254px;overflow:visible" width="16" height="16" viewBox="0 0 16 16"><path d="M6.5 2.9 H3.4 Q0.9 2.9 0.9 5.4 V11.3 Q0.9 13.8 3.4 13.8 H9.6 Q12.1 13.8 12.1 11.3 V8.4" fill="none" stroke="#444" stroke-width="1.9" stroke-linecap="round"/><path d="M3.7 10.7 L4.5 7.5 L11.5 0.5 Q12.5 -0.3 13.5 0.5 L14.5 1.5 Q15.3 2.5 14.5 3.5 L7.5 10.3 Z" fill="#444"/><path d="M10.6 1.6 L13.4 4.4" stroke="#fff" stroke-width="0.5" opacity="0.6"/></svg>
<div style="position:absolute;left:1512px;top:385px;width:44px;height:22px;background:#3aaa78;border-radius:11px"></div>
<svg style="position:absolute;left:1512px;top:385px;" width="44" height="22" viewBox="0 0 44 22"><path d="M15 7.3 L21.5 4 L28 7.3 L21.5 10.5 Z M15 7.3 V10.4 L21.5 13.6 L28 10.4 V7.3 M15 10.4 V13.5 L21.5 16.8 L28 13.5 V10.4" fill="none" stroke="#fff" stroke-width="1" stroke-linejoin="round"/></svg>
<svg style="position:absolute;left:1268.8px;top:424px;" width="15" height="10" viewBox="0 0 15 10"><rect x="0" y="0" width="10" height="10" rx="2" fill="#444"/><path d="M10.5 3.5 L14.5 0.8 V9.2 L10.5 6.5Z" fill="#444"/></svg>
<span class="t" style="left:1297.46px;top:420.85px;font-size:18.90px;color:#444;font-weight:normal;transform:scaleX(1.1383);transform-origin:0 0;-webkit-text-stroke:0.70px #444;">Inventario 2.mp4</span>
<div style="position:absolute;left:1573px;top:239px;width:302px;height:206px;box-sizing:border-box;border:1px solid #d2d2d2;border-radius:5px;background:#fff"></div>
<div style="position:absolute;left:1574px;top:283.5px;width:300px;height:132px;background:#f8f8f8"></div>
<div style="position:absolute;left:1607px;top:284px;width:234px;height:3px;background:#d9f1ec"></div>
<svg style="position:absolute;left:1607px;top:287px;overflow:hidden" width="234" height="129" viewBox="0 0 234 129"><defs><radialGradient id="g5_r" cx="0.22" cy="0.35" r="0.75"><stop offset="0" stop-color="#2c5a4f"/><stop offset="0.5" stop-color="#14302a"/><stop offset="1" stop-color="#000"/></radialGradient></defs><rect width="234" height="129" fill="url(#g5_r)"/><g transform="scale(1 0.9817)"><ellipse cx="47" cy="85" rx="45" ry="43" fill="#eef3f0"/><rect x="8" y="48" width="56" height="68" fill="#d9d6ec"/><rect x="13" y="54" width="46" height="58" fill="#f6f8f8"/><rect x="28" y="44" width="22" height="8" rx="2" fill="#7aa6a0"/><rect x="20" y="68" width="32" height="3" fill="#c5d8d6"/><rect x="20" y="76" width="32" height="3" fill="#c5d8d6"/><rect x="20" y="90" width="32" height="3" fill="#c5d8d6"/><rect x="20" y="100" width="32" height="3" fill="#c5d8d6"/><path d="M56 62 Q70 60 74 72 Q76 86 68 92 L56 92Z" fill="#1f8a70"/><circle cx="29" cy="74" r="15" fill="none" stroke="#2c3140" stroke-width="4"/><path d="M19 86 L5 111" stroke="#2c3140" stroke-width="4"/><path d="M51 75 H79 V119 H51Z" fill="#f0703a"/><path d="M51 96 H79" stroke="#d95a2a" stroke-width="1"/><path d="M76 12 Q78 10 80 12 L107 52 Q108 56 104 56 L52 60 Q48 60 50 56Z" fill="#f3a93a"/><path d="M76 20 L99 51 L57 54Z" fill="none" stroke="#3b3b55" stroke-width="2.2"/><rect x="73.5" y="31" width="4" height="12" rx="2" fill="#3b3b55"/><circle cx="75.8" cy="47" r="2.2" fill="#3b3b55"/><path d="M37 92 Q42 86 48 92 L48 112 L44 128 L40 128 L41 112 L38 110Z" fill="#1f8a70"/><path d="M40 110 L47 110 L46 128 L41 128Z" fill="#3a2c6a"/><circle cx="43" cy="86" r="2.5" fill="#2a2030"/><path d="M66 96 Q72 90 78 96 L77 112 L70 112Z" fill="#a7a6d8"/><path d="M69 112 L76 112 L75 124 L71 124Z" fill="#2a2545"/><path d="M74 90 Q84 92 86 98" stroke="#5a4c8a" stroke-width="3" fill="none"/><text x="167" y="38" font-size="8.2" fill="#fff" text-anchor="middle" font-family="Liberation Sans" textLength="52" lengthAdjust="spacingAndGlyphs">Inventario de</text><text x="168" y="47.5" font-size="9.2" font-weight="bold" fill="#5ec4b0" text-anchor="middle" font-family="Liberation Sans" textLength="90" lengthAdjust="spacingAndGlyphs">activos asignados</text><rect x="111" y="55.3" width="115.4" height="46" rx="5" fill="none" stroke="#4fb3a0" stroke-width="1.3"/><rect x="121" y="65.4" width="97" height="2.8" fill="#a0a0a0" opacity="0.55"/><rect x="128" y="72.9" width="83" height="2.8" fill="#a0a0a0" opacity="0.55"/><rect x="119" y="80.4" width="103" height="2.8" fill="#a0a0a0" opacity="0.55"/><rect x="125" y="87.9" width="35" height="2.8" fill="#a0a0a0" opacity="0.55"/><text x="213" y="24" font-size="6" font-weight="bold" fill="#ccc" text-anchor="middle" font-family="Liberation Sans">tekus</text></g></svg>
<div style="position:absolute;left:1580.4px;top:252px;width:63.6px;height:20px;background:#f0f0f0;border-radius:10px"></div>
<span class="t" style="left:1584.46px;top:256.05px;font-size:12.50px;color:#555;font-weight:normal;transform:scaleX(1.0439);transform-origin:0 0;">MD-3832</span>
<span class="t" style="left:1648.81px;top:257.20px;font-size:12.60px;color:#555;font-weight:normal;transform:scaleX(0.9348);transform-origin:0 0;">7.50MB</span>
<svg style="position:absolute;left:1846px;top:254px;overflow:visible" width="16" height="16" viewBox="0 0 16 16"><path d="M6.5 2.9 H3.4 Q0.9 2.9 0.9 5.4 V11.3 Q0.9 13.8 3.4 13.8 H9.6 Q12.1 13.8 12.1 11.3 V8.4" fill="none" stroke="#444" stroke-width="1.9" stroke-linecap="round"/><path d="M3.7 10.7 L4.5 7.5 L11.5 0.5 Q12.5 -0.3 13.5 0.5 L14.5 1.5 Q15.3 2.5 14.5 3.5 L7.5 10.3 Z" fill="#444"/><path d="M10.6 1.6 L13.4 4.4" stroke="#fff" stroke-width="0.5" opacity="0.6"/></svg>
<div style="position:absolute;left:1824px;top:385px;width:44px;height:22px;background:#d9d9d9;border-radius:11px"></div>
<svg style="position:absolute;left:1824px;top:385px;" width="44" height="22" viewBox="0 0 44 22"><path d="M15 7.3 L21.5 4 L28 7.3 L21.5 10.5 Z M15 7.3 V10.4 L21.5 13.6 L28 10.4 V7.3 M15 10.4 V13.5 L21.5 16.8 L28 13.5 V10.4" fill="none" stroke="#555" stroke-width="1" stroke-linejoin="round"/></svg>
<svg style="position:absolute;left:1580.8px;top:424px;" width="15" height="10" viewBox="0 0 15 10"><rect x="0" y="0" width="10" height="10" rx="2" fill="#444"/><path d="M10.5 3.5 L14.5 0.8 V9.2 L10.5 6.5Z" fill="#444"/></svg>
<span class="t" style="left:1609.25px;top:420.85px;font-size:18.90px;color:#444;font-weight:normal;transform:scaleX(1.1440);transform-origin:0 0;-webkit-text-stroke:0.70px #444;">Inventario 2.mp4</span>
<div style="position:absolute;left:323px;top:475px;width:302px;height:206px;box-sizing:border-box;border:1px solid #d2d2d2;border-radius:5px;background:#fff"></div>
<div style="position:absolute;left:324px;top:519.5px;width:300px;height:132px;background:#f8f8f8"></div>
<svg style="position:absolute;left:408px;top:520px;overflow:hidden" width="132" height="132" viewBox="0 0 132 132"><defs><radialGradient id="g6_gl" cx="0.5" cy="0.5" r="0.5"><stop offset="0" stop-color="#336e60" stop-opacity="1"/><stop offset="0.35" stop-color="#24503f" stop-opacity="0.8"/><stop offset="0.7" stop-color="#132a24" stop-opacity="0.45"/><stop offset="1" stop-color="#000" stop-opacity="0"/></radialGradient><linearGradient id="g6_sl" x1="0" x2="1" y1="0" y2="0"><stop offset="0" stop-color="#3d8c9a"/><stop offset="0.6" stop-color="#1b4a6a"/><stop offset="1" stop-color="#0b1e33"/></linearGradient><linearGradient id="g6_sr" x1="0" x2="1" y1="0" y2="0"><stop offset="0" stop-color="#0b1e33"/><stop offset="0.5" stop-color="#1b4a6a"/><stop offset="1" stop-color="#4ea3aa"/></linearGradient><linearGradient id="g6_ring" x1="0.15" x2="0.85" y1="0.1" y2="0.9"><stop offset="0" stop-color="#0c2636"/><stop offset="0.5" stop-color="#1a4f70"/><stop offset="1" stop-color="#5ab8b0"/></linearGradient></defs><rect width="132" height="132" fill="#000"/><circle cx="130" cy="0" r="90" fill="url(#g6_gl)"/><circle cx="0" cy="130" r="70" fill="url(#g6_gl)"/><path d="M0 5 H61 L67 11 H0Z" fill="url(#g6_sl)"/><path d="M0 18.6 H27 L37 34 H0Z" fill="url(#g6_sl)"/><path d="M94 96 H132 V110.7 H86Z" fill="url(#g6_sr)"/><path d="M79 118 H132 V124 H74Z" fill="url(#g6_sr)"/><circle cx="64.6" cy="88.4" r="32" fill="url(#g6_ring)"/><circle cx="64.6" cy="88.4" r="25.28" fill="#0b1414"/><circle cx="64.6" cy="88.4" r="24.80" fill="#dcdcdc"/><circle cx="64.6" cy="88.4" r="24.16" fill="#000"/><circle cx="64.6" cy="88.4" r="23.04" fill="#5ec4b0"/><path d="M43.48 82.00 Q50.20 72.40 59.80 71.76 Q67.80 63.44 75.80 70.80 Q83.80 74.00 87.00 81.36 L82.20 86.80 Q74.20 80.40 66.20 84.56 Q53.40 89.04 43.48 82.00Z" fill="#000"/><path d="M67.16 66.32 A7.68 7.68 0 0 1 74.20 77.20" fill="none" stroke="#5ec4b0" stroke-width="0.80"/><circle cx="46.68" cy="76.24" r="3.52" fill="#5ec4b0"/><text x="67.16" y="77.84" font-size="10.88" font-weight="bold" fill="#fff" text-anchor="middle" font-family="Liberation Sans">k</text><clipPath id="g7"><circle cx="64.6" cy="88.4" r="23.68"/></clipPath><g clip-path="url(#g7)"><g transform="translate(64.60 108.24) scale(1 1.75)"><text x="0" y="0" font-size="19.20" font-weight="bold" fill="#5ec4b0" stroke="#000" stroke-width="2.56" paint-order="stroke" text-anchor="middle" font-family="Liberation Sans" textLength="41.60" lengthAdjust="spacingAndGlyphs">VIBES</text></g></g><g transform="translate(-15 45.6) scale(0.8)"><path d="M-2 30 Q8 26 18 30 L30 44 Q40 50 36 60 L30 84 H-2Z" fill="#e4dabb"/><path d="M2 50 Q10 56 20 52 M0 64 Q12 70 24 66 M4 76 Q14 80 26 78" stroke="#8a8470" stroke-width="0.8" fill="none"/><path d="M-2 40 Q3 44 2 52 L-2 54Z" fill="#3fa07a"/><path d="M0 72 Q4 76 2 84 H-2V72Z" fill="#3fa07a"/><path d="M10 36 Q4 26 8 18 Q12 12 18 14 Q24 18 22 26 L24 36Z" fill="#e4dabb"/><path d="M10 17 Q14 13 19 15 L18 19 Q14 17 11 20Z" fill="#3fa07a"/><circle cx="35.4" cy="28" r="12.3" fill="#e4dabb"/><ellipse cx="35.8" cy="31.4" rx="10" ry="10.6" fill="#0c1418" stroke="#c9c2a8" stroke-width="0.6"/><circle cx="33.5" cy="24.5" r="2" fill="#3fb08a"/><circle cx="34" cy="31.6" r="1.4" fill="#3fb08a"/><path d="M20 46 L33 50 L31 58 L18 54Z" fill="#8d9590"/><rect x="23" y="50" width="3" height="3" fill="#3a8aa0"/><path d="M34 44 Q42 48 48 58 L58 74 L52 78 L42 64 Q36 56 32 52Z" fill="#e4dabb"/><path d="M42 56 L48 53 L51 60 L45 63Z" fill="#3fa07a"/><path d="M47 64 L53 61 L55 66 L50 69Z" fill="#6a7a70"/><path d="M51 70 L58 68 L60 80 L53 82Z" fill="#3a4040"/><path d="M29 58 Q32 66 36 74" stroke="#222" stroke-width="0.7" fill="none"/><circle cx="36.5" cy="75" r="1" fill="#4aa8d8"/></g><g transform="translate(28 16) scale(0.4735099337748344)"><g transform="translate(-6.42 -6.76) scale(1.69)"><path d="M7.85 4 V20.5 Q7.85 22.8 10.5 22.8 H12.6" fill="none" stroke="#fff" stroke-width="3.8"/><rect x="3.8" y="8.2" width="9" height="2.9" fill="#fff"/><path d="M15.2 15.6 H27.8 A6.4 6.4 0 1 0 25.6 21.2" fill="none" stroke="#fff" stroke-width="3.0"/><rect x="31.2" y="4" width="3.8" height="20.7" fill="#fff"/><rect x="41.9" y="7.1" width="3.8" height="3.2" fill="#fff"/><rect x="38.3" y="10.3" width="3.6" height="3.5" fill="#fff"/><rect x="35" y="13.8" width="3.3" height="3.4" fill="#eee"/><rect x="38.3" y="17.2" width="3.6" height="3.3" fill="#fff"/><rect x="41.9" y="20.5" width="3.8" height="4.2" fill="#fff"/><path d="M48.85 8.2 V17.2 A5.1 5.1 0 0 0 59.05 17.2 M59.05 8.2 V24.6" fill="none" stroke="#5ec4b0" stroke-width="3.9"/><path d="M73.6 11.2 Q71.5 9.9 69 9.9 Q64.9 9.9 64.9 12.8 Q64.9 15.2 69.2 16.3 Q73.4 17.4 73.4 20.2 Q73.4 22.7 69 22.7 Q65.8 22.7 63.9 21" fill="none" stroke="#5ec4b0" stroke-width="3.6"/></g><rect x="125" y="7" width="1.3" height="28" fill="#ddd"/><text x="129.5" y="20" font-size="16" font-weight="bold" fill="#fff" font-family="Liberation Sans" textLength="21.5" lengthAdjust="spacingAndGlyphs">20</text><text x="129.5" y="35.5" font-size="16" font-weight="bold" fill="#5ec4b0" font-family="Liberation Sans" textLength="21.5" lengthAdjust="spacingAndGlyphs">25</text><text x="1" y="59.5" font-size="22.5" fill="#fff" font-family="Liberation Sans" textLength="88" lengthAdjust="spacingAndGlyphs" stroke="#fff" stroke-width="0.3">Culture</text><text x="97" y="59.5" font-size="22.5" font-weight="bold" fill="#fff" font-family="Liberation Sans" textLength="52" lengthAdjust="spacingAndGlyphs">Fest</text></g></svg>
<div style="position:absolute;left:330.4px;top:488px;width:60.2px;height:20px;background:#f0f0f0;border-radius:10px"></div>
<span class="t" style="left:334.52px;top:492.05px;font-size:12.50px;color:#555;font-weight:normal;transform:scaleX(0.9757);transform-origin:0 0;">MD-3831</span>
<span class="t" style="left:395.53px;top:493.20px;font-size:12.60px;color:#555;font-weight:normal;transform:scaleX(0.9320);transform-origin:0 0;">8.69MB</span>
<svg style="position:absolute;left:596px;top:490px;overflow:visible" width="16" height="16" viewBox="0 0 16 16"><path d="M6.5 2.9 H3.4 Q0.9 2.9 0.9 5.4 V11.3 Q0.9 13.8 3.4 13.8 H9.6 Q12.1 13.8 12.1 11.3 V8.4" fill="none" stroke="#444" stroke-width="1.9" stroke-linecap="round"/><path d="M3.7 10.7 L4.5 7.5 L11.5 0.5 Q12.5 -0.3 13.5 0.5 L14.5 1.5 Q15.3 2.5 14.5 3.5 L7.5 10.3 Z" fill="#444"/><path d="M10.6 1.6 L13.4 4.4" stroke="#fff" stroke-width="0.5" opacity="0.6"/></svg>
<div style="position:absolute;left:574px;top:621px;width:44px;height:22px;background:#3aaa78;border-radius:11px"></div>
<svg style="position:absolute;left:574px;top:621px;" width="44" height="22" viewBox="0 0 44 22"><path d="M15 7.3 L21.5 4 L28 7.3 L21.5 10.5 Z M15 7.3 V10.4 L21.5 13.6 L28 10.4 V7.3 M15 10.4 V13.5 L21.5 16.8 L28 13.5 V10.4" fill="none" stroke="#fff" stroke-width="1" stroke-linejoin="round"/></svg>
<svg style="position:absolute;left:330.8px;top:660px;" width="15" height="10" viewBox="0 0 15 10"><rect x="0" y="0" width="10" height="10" rx="2" fill="#444"/><path d="M10.5 3.5 L14.5 0.8 V9.2 L10.5 6.5Z" fill="#444"/></svg>
<span class="t" style="left:359.68px;top:656.85px;font-size:18.90px;color:#444;font-weight:normal;transform:scaleX(1.1366);transform-origin:0 0;-webkit-text-stroke:0.70px #444;">Led cuadrada.mp4</span>
<div style="position:absolute;left:636px;top:475px;width:302px;height:206px;box-sizing:border-box;border:1px solid #d2d2d2;border-radius:5px;background:#fff"></div>
<div style="position:absolute;left:637px;top:519.5px;width:300px;height:132px;background:#f8f8f8"></div>
<svg style="position:absolute;left:669px;top:520px;overflow:hidden" width="235" height="132" viewBox="0 0 235 132"><defs><radialGradient id="g8_gl" cx="0.5" cy="0.5" r="0.5"><stop offset="0" stop-color="#336e60" stop-opacity="1"/><stop offset="0.35" stop-color="#24503f" stop-opacity="0.8"/><stop offset="0.7" stop-color="#132a24" stop-opacity="0.45"/><stop offset="1" stop-color="#000" stop-opacity="0"/></radialGradient><linearGradient id="g8_sl" x1="0" x2="1" y1="0" y2="0"><stop offset="0" stop-color="#3d8c9a"/><stop offset="0.6" stop-color="#1b4a6a"/><stop offset="1" stop-color="#0b1e33"/></linearGradient><linearGradient id="g8_sr" x1="0" x2="1" y1="0" y2="0"><stop offset="0" stop-color="#0b1e33"/><stop offset="0.5" stop-color="#1b4a6a"/><stop offset="1" stop-color="#4ea3aa"/></linearGradient><linearGradient id="g8_ring" x1="0.15" x2="0.85" y1="0.1" y2="0.9"><stop offset="0" stop-color="#0c2636"/><stop offset="0.5" stop-color="#1a4f70"/><stop offset="1" stop-color="#5ab8b0"/></linearGradient></defs><rect width="235" height="132" fill="#000"/><circle cx="210" cy="5" r="95" fill="url(#g8_gl)"/><circle cx="28" cy="112" r="90" fill="url(#g8_gl)"/><path d="M0 9.2 H101 L113 21.9 H0Z" fill="url(#g8_sl)"/><path d="M0 38 H46 L60 56.8 H0Z" fill="url(#g8_sl)"/><path d="M183 87 H235 V99 H173Z" fill="url(#g8_sr)"/><path d="M138.7 119 H235 V126.7 H132.7Z" fill="url(#g8_sr)"/><text x="24.2" y="42.7" font-size="29" font-weight="bold" fill="#fff" font-family="Liberation Sans" textLength="189" lengthAdjust="spacingAndGlyphs">¡Bienvenidos!</text><g transform="translate(37.6 63.5) scale(0.625)"><g transform="translate(-6.42 -6.76) scale(1.69)"><path d="M7.85 4 V20.5 Q7.85 22.8 10.5 22.8 H12.6" fill="none" stroke="#fff" stroke-width="3.8"/><rect x="3.8" y="8.2" width="9" height="2.9" fill="#fff"/><path d="M15.2 15.6 H27.8 A6.4 6.4 0 1 0 25.6 21.2" fill="none" stroke="#fff" stroke-width="3.0"/><rect x="31.2" y="4" width="3.8" height="20.7" fill="#fff"/><rect x="41.9" y="7.1" width="3.8" height="3.2" fill="#fff"/><rect x="38.3" y="10.3" width="3.6" height="3.5" fill="#fff"/><rect x="35" y="13.8" width="3.3" height="3.4" fill="#eee"/><rect x="38.3" y="17.2" width="3.6" height="3.3" fill="#fff"/><rect x="41.9" y="20.5" width="3.8" height="4.2" fill="#fff"/><path d="M48.85 8.2 V17.2 A5.1 5.1 0 0 0 59.05 17.2 M59.05 8.2 V24.6" fill="none" stroke="#5ec4b0" stroke-width="3.9"/><path d="M73.6 11.2 Q71.5 9.9 69 9.9 Q64.9 9.9 64.9 12.8 Q64.9 15.2 69.2 16.3 Q73.4 17.4 73.4 20.2 Q73.4 22.7 69 22.7 Q65.8 22.7 63.9 21" fill="none" stroke="#5ec4b0" stroke-width="3.6"/></g><rect x="125" y="7" width="1.3" height="28" fill="#ddd"/><text x="129.5" y="20" font-size="16" font-weight="bold" fill="#fff" font-family="Liberation Sans" textLength="21.5" lengthAdjust="spacingAndGlyphs">20</text><text x="129.5" y="35.5" font-size="16" font-weight="bold" fill="#5ec4b0" font-family="Liberation Sans" textLength="21.5" lengthAdjust="spacingAndGlyphs">25</text><text x="1" y="59.5" font-size="22.5" fill="#fff" font-family="Liberation Sans" textLength="88" lengthAdjust="spacingAndGlyphs" stroke="#fff" stroke-width="0.3">Culture</text><text x="97" y="59.5" font-size="22.5" font-weight="bold" fill="#fff" font-family="Liberation Sans" textLength="52" lengthAdjust="spacingAndGlyphs">Fest</text></g><circle cx="175.5" cy="83.5" r="30.1" fill="url(#g8_ring)"/><circle cx="175.5" cy="83.5" r="23.78" fill="#0b1414"/><circle cx="175.5" cy="83.5" r="23.33" fill="#dcdcdc"/><circle cx="175.5" cy="83.5" r="22.73" fill="#000"/><circle cx="175.5" cy="83.5" r="21.67" fill="#5ec4b0"/><path d="M155.63 77.48 Q161.95 68.45 170.99 67.85 Q178.51 60.02 186.03 66.94 Q193.56 69.95 196.57 76.88 L192.06 82.00 Q184.53 75.97 177.00 79.89 Q164.97 84.10 155.63 77.48Z" fill="#000"/><path d="M177.91 62.73 A7.22 7.22 0 0 1 184.53 72.97" fill="none" stroke="#5ec4b0" stroke-width="0.75"/><circle cx="158.64" cy="72.06" r="3.31" fill="#5ec4b0"/><text x="177.91" y="73.57" font-size="10.23" font-weight="bold" fill="#fff" text-anchor="middle" font-family="Liberation Sans">k</text><clipPath id="g9"><circle cx="175.5" cy="83.5" r="22.27"/></clipPath><g clip-path="url(#g9)"><g transform="translate(175.50 102.16) scale(1 1.75)"><text x="0" y="0" font-size="18.06" font-weight="bold" fill="#5ec4b0" stroke="#000" stroke-width="2.41" paint-order="stroke" text-anchor="middle" font-family="Liberation Sans" textLength="39.13" lengthAdjust="spacingAndGlyphs">VIBES</text></g></g></svg>
<div style="position:absolute;left:643.4px;top:488px;width:63.6px;height:20px;background:#f0f0f0;border-radius:10px"></div>
<span class="t" style="left:647.46px;top:492.05px;font-size:12.50px;color:#555;font-weight:normal;transform:scaleX(1.0413);transform-origin:0 0;">MD-3830</span>
<span class="t" style="left:711.81px;top:493.20px;font-size:12.60px;color:#555;font-weight:normal;transform:scaleX(0.9348);transform-origin:0 0;">2.38MB</span>
<svg style="position:absolute;left:909px;top:490px;overflow:visible" width="16" height="16" viewBox="0 0 16 16"><path d="M6.5 2.9 H3.4 Q0.9 2.9 0.9 5.4 V11.3 Q0.9 13.8 3.4 13.8 H9.6 Q12.1 13.8 12.1 11.3 V8.4" fill="none" stroke="#444" stroke-width="1.9" stroke-linecap="round"/><path d="M3.7 10.7 L4.5 7.5 L11.5 0.5 Q12.5 -0.3 13.5 0.5 L14.5 1.5 Q15.3 2.5 14.5 3.5 L7.5 10.3 Z" fill="#444"/><path d="M10.6 1.6 L13.4 4.4" stroke="#fff" stroke-width="0.5" opacity="0.6"/></svg>
<div style="position:absolute;left:887px;top:621px;width:44px;height:22px;background:#3aaa78;border-radius:11px"></div>
<svg style="position:absolute;left:887px;top:621px;" width="44" height="22" viewBox="0 0 44 22"><path d="M15 7.3 L21.5 4 L28 7.3 L21.5 10.5 Z M15 7.3 V10.4 L21.5 13.6 L28 10.4 V7.3 M15 10.4 V13.5 L21.5 16.8 L28 13.5 V10.4" fill="none" stroke="#fff" stroke-width="1" stroke-linejoin="round"/></svg>
<svg style="position:absolute;left:643.8px;top:660px;" width="15" height="10" viewBox="0 0 15 10"><rect x="0" y="0" width="10" height="10" rx="2" fill="#444"/><path d="M10.5 3.5 L14.5 0.8 V9.2 L10.5 6.5Z" fill="#444"/></svg>
<span class="t" style="left:672.17px;top:656.85px;font-size:18.90px;color:#444;font-weight:normal;transform:scaleX(1.1413);transform-origin:0 0;-webkit-text-stroke:0.70px #444;">Bienvenida.mp4</span>
<div style="position:absolute;left:948px;top:475px;width:302px;height:206px;box-sizing:border-box;border:1px solid #d2d2d2;border-radius:5px;background:#fff"></div>
<div style="position:absolute;left:949px;top:519.5px;width:300px;height:132px;background:#f8f8f8"></div>
<svg style="position:absolute;left:982px;top:520px;overflow:hidden" width="234" height="132" viewBox="0 0 234 132"><defs><radialGradient id="g10_gl" cx="0.5" cy="0.5" r="0.5"><stop offset="0" stop-color="#336e60" stop-opacity="1"/><stop offset="0.35" stop-color="#24503f" stop-opacity="0.8"/><stop offset="0.7" stop-color="#132a24" stop-opacity="0.45"/><stop offset="1" stop-color="#000" stop-opacity="0"/></radialGradient><linearGradient id="g10_sl" x1="0" x2="1" y1="0" y2="0"><stop offset="0" stop-color="#3d8c9a"/><stop offset="0.6" stop-color="#1b4a6a"/><stop offset="1" stop-color="#0b1e33"/></linearGradient><linearGradient id="g10_sr" x1="0" x2="1" y1="0" y2="0"><stop offset="0" stop-color="#0b1e33"/><stop offset="0.5" stop-color="#1b4a6a"/><stop offset="1" stop-color="#4ea3aa"/></linearGradient><linearGradient id="g10_ring" x1="0.15" x2="0.85" y1="0.1" y2="0.9"><stop offset="0" stop-color="#0c2636"/><stop offset="0.5" stop-color="#1a4f70"/><stop offset="1" stop-color="#5ab8b0"/></linearGradient></defs><rect width="234" height="132" fill="#000"/><circle cx="206" cy="8" r="95" fill="url(#g10_gl)"/><circle cx="28" cy="108" r="90" fill="url(#g10_gl)"/><path d="M0 9.2 H101 L113 21.9 H0Z" fill="url(#g10_sl)"/><path d="M0 38.2 H26.6 L40.6 56.8 H0Z" fill="url(#g10_sl)"/><path d="M181 88 H234 V108 H167Z" fill="url(#g10_sr)"/><path d="M139.5 119.2 H234 V126.7 H133.5Z" fill="url(#g10_sr)"/><g transform="translate(41.3 35.2) scale(1.0)"><g transform="translate(-6.42 -6.76) scale(1.69)"><path d="M7.85 4 V20.5 Q7.85 22.8 10.5 22.8 H12.6" fill="none" stroke="#fff" stroke-width="3.8"/><rect x="3.8" y="8.2" width="9" height="2.9" fill="#fff"/><path d="M15.2 15.6 H27.8 A6.4 6.4 0 1 0 25.6 21.2" fill="none" stroke="#fff" stroke-width="3.0"/><rect x="31.2" y="4" width="3.8" height="20.7" fill="#fff"/><rect x="41.9" y="7.1" width="3.8" height="3.2" fill="#fff"/><rect x="38.3" y="10.3" width="3.6" height="3.5" fill="#fff"/><rect x="35" y="13.8" width="3.3" height="3.4" fill="#eee"/><rect x="38.3" y="17.2" width="3.6" height="3.3" fill="#fff"/><rect x="41.9" y="20.5" width="3.8" height="4.2" fill="#fff"/><path d="M48.85 8.2 V17.2 A5.1 5.1 0 0 0 59.05 17.2 M59.05 8.2 V24.6" fill="none" stroke="#5ec4b0" stroke-width="3.9"/><path d="M73.6 11.2 Q71.5 9.9 69 9.9 Q64.9 9.9 64.9 12.8 Q64.9 15.2 69.2 16.3 Q73.4 17.4 73.4 20.2 Q73.4 22.7 69 22.7 Q65.8 22.7 63.9 21" fill="none" stroke="#5ec4b0" stroke-width="3.6"/></g><rect x="125" y="7" width="1.3" height="28" fill="#ddd"/><text x="129.5" y="20" font-size="16" font-weight="bold" fill="#fff" font-family="Liberation Sans" textLength="21.5" lengthAdjust="spacingAndGlyphs">20</text><text x="129.5" y="35.5" font-size="16" font-weight="bold" fill="#5ec4b0" font-family="Liberation Sans" textLength="21.5" lengthAdjust="spacingAndGlyphs">25</text><text x="1" y="59.5" font-size="22.5" fill="#fff" font-family="Liberation Sans" textLength="88" lengthAdjust="spacingAndGlyphs" stroke="#fff" stroke-width="0.3">Culture</text><text x="97" y="59.5" font-size="22.5" font-weight="bold" fill="#fff" font-family="Liberation Sans" textLength="52" lengthAdjust="spacingAndGlyphs">Fest</text></g></svg>
<div style="position:absolute;left:955.4px;top:488px;width:63.6px;height:20px;background:#f0f0f0;border-radius:10px"></div>
<span class="t" style="left:959.46px;top:492.05px;font-size:12.50px;color:#555;font-weight:normal;transform:scaleX(1.0439);transform-origin:0 0;">MD-3829</span>
<span class="t" style="left:1024.17px;top:493.20px;font-size:12.60px;color:#555;font-weight:normal;transform:scaleX(0.9265);transform-origin:0 0;">4.29MB</span>
<svg style="position:absolute;left:1221px;top:490px;overflow:visible" width="16" height="16" viewBox="0 0 16 16"><path d="M6.5 2.9 H3.4 Q0.9 2.9 0.9 5.4 V11.3 Q0.9 13.8 3.4 13.8 H9.6 Q12.1 13.8 12.1 11.3 V8.4" fill="none" stroke="#444" stroke-width="1.9" stroke-linecap="round"/><path d="M3.7 10.7 L4.5 7.5 L11.5 0.5 Q12.5 -0.3 13.5 0.5 L14.5 1.5 Q15.3 2.5 14.5 3.5 L7.5 10.3 Z" fill="#444"/><path d="M10.6 1.6 L13.4 4.4" stroke="#fff" stroke-width="0.5" opacity="0.6"/></svg>
<div style="position:absolute;left:1199px;top:621px;width:44px;height:22px;background:#3aaa78;border-radius:11px"></div>
<svg style="position:absolute;left:1199px;top:621px;" width="44" height="22" viewBox="0 0 44 22"><path d="M15 7.3 L21.5 4 L28 7.3 L21.5 10.5 Z M15 7.3 V10.4 L21.5 13.6 L28 10.4 V7.3 M15 10.4 V13.5 L21.5 16.8 L28 13.5 V10.4" fill="none" stroke="#fff" stroke-width="1" stroke-linejoin="round"/></svg>
<svg style="position:absolute;left:955.8px;top:660px;" width="15" height="10" viewBox="0 0 15 10"><rect x="0" y="0" width="10" height="10" rx="2" fill="#444"/><path d="M10.5 3.5 L14.5 0.8 V9.2 L10.5 6.5Z" fill="#444"/></svg>
<span class="t" style="left:984.75px;top:656.85px;font-size:18.90px;color:#444;font-weight:normal;transform:scaleX(1.0752);transform-origin:0 0;-webkit-text-stroke:0.70px #444;">Logo 2-1.mp4</span>
<div style="position:absolute;left:1261px;top:475px;width:302px;height:206px;box-sizing:border-box;border:1px solid #d2d2d2;border-radius:5px;background:#fff"></div>
<div style="position:absolute;left:1262px;top:519.5px;width:300px;height:132px;background:#f8f8f8"></div>
<svg style="position:absolute;left:1262px;top:545px;overflow:hidden" width="299.5" height="82.6" viewBox="0 0 299.5 82.6"><defs><radialGradient id="g11_gl" cx="0.5" cy="0.5" r="0.5"><stop offset="0" stop-color="#336e60" stop-opacity="1"/><stop offset="0.35" stop-color="#24503f" stop-opacity="0.8"/><stop offset="0.7" stop-color="#132a24" stop-opacity="0.45"/><stop offset="1" stop-color="#000" stop-opacity="0"/></radialGradient><linearGradient id="g11_sl" x1="0" x2="1" y1="0" y2="0"><stop offset="0" stop-color="#3d8c9a"/><stop offset="0.6" stop-color="#1b4a6a"/><stop offset="1" stop-color="#0b1e33"/></linearGradient><linearGradient id="g11_sr" x1="0" x2="1" y1="0" y2="0"><stop offset="0" stop-color="#0b1e33"/><stop offset="0.5" stop-color="#1b4a6a"/><stop offset="1" stop-color="#4ea3aa"/></linearGradient><linearGradient id="g11_ring" x1="0.15" x2="0.85" y1="0.1" y2="0.9"><stop offset="0" stop-color="#0c2636"/><stop offset="0.5" stop-color="#1a4f70"/><stop offset="1" stop-color="#5ab8b0"/></linearGradient></defs><rect width="299.5" height="82.6" fill="#000"/><circle cx="295" cy="0" r="90" fill="url(#g11_gl)"/><circle cx="90" cy="40" r="60" fill="url(#g11_gl)"/><path d="M0 2.6 H104 L110 11.7 H0Z" fill="url(#g11_sl)"/><path d="M0 23 H56 L64 33.5 H0Z" fill="url(#g11_sl)"/><path d="M279 33.5 H299.5 V60.8 H265Z" fill="url(#g11_sr)"/><path d="M209.4 66.4 H299.5 V75.3 H203.4Z" fill="url(#g11_sr)"/><circle cx="91.7" cy="38.7" r="34.6" fill="url(#g11_ring)"/><circle cx="91.7" cy="38.7" r="27.33" fill="#0b1414"/><circle cx="91.7" cy="38.7" r="26.82" fill="#dcdcdc"/><circle cx="91.7" cy="38.7" r="26.12" fill="#000"/><circle cx="91.7" cy="38.7" r="24.91" fill="#5ec4b0"/><path d="M68.86 31.78 Q76.13 21.40 86.51 20.71 Q95.16 11.71 103.81 19.67 Q112.46 23.13 115.92 31.09 L110.73 36.97 Q102.08 30.05 93.43 34.55 Q79.59 39.39 68.86 31.78Z" fill="#000"/><path d="M94.47 14.83 A8.30 8.30 0 0 1 102.08 26.59" fill="none" stroke="#5ec4b0" stroke-width="0.87"/><circle cx="72.32" cy="25.55" r="3.81" fill="#5ec4b0"/><text x="94.47" y="27.28" font-size="11.76" font-weight="bold" fill="#fff" text-anchor="middle" font-family="Liberation Sans">k</text><clipPath id="g12"><circle cx="91.7" cy="38.7" r="25.60"/></clipPath><g clip-path="url(#g12)"><g transform="translate(91.70 60.15) scale(1 1.75)"><text x="0" y="0" font-size="20.76" font-weight="bold" fill="#5ec4b0" stroke="#000" stroke-width="2.77" paint-order="stroke" text-anchor="middle" font-family="Liberation Sans" textLength="44.98" lengthAdjust="spacingAndGlyphs">VIBES</text></g></g><g transform="translate(0 0) scale(1.0)"><path d="M-2 30 Q8 26 18 30 L30 44 Q40 50 36 60 L30 84 H-2Z" fill="#e4dabb"/><path d="M2 50 Q10 56 20 52 M0 64 Q12 70 24 66 M4 76 Q14 80 26 78" stroke="#8a8470" stroke-width="0.8" fill="none"/><path d="M-2 40 Q3 44 2 52 L-2 54Z" fill="#3fa07a"/><path d="M0 72 Q4 76 2 84 H-2V72Z" fill="#3fa07a"/><path d="M10 36 Q4 26 8 18 Q12 12 18 14 Q24 18 22 26 L24 36Z" fill="#e4dabb"/><path d="M10 17 Q14 13 19 15 L18 19 Q14 17 11 20Z" fill="#3fa07a"/><circle cx="35.4" cy="28" r="12.3" fill="#e4dabb"/><ellipse cx="35.8" cy="31.4" rx="10" ry="10.6" fill="#0c1418" stroke="#c9c2a8" stroke-width="0.6"/><circle cx="33.5" cy="24.5" r="2" fill="#3fb08a"/><circle cx="34" cy="31.6" r="1.4" fill="#3fb08a"/><path d="M20 46 L33 50 L31 58 L18 54Z" fill="#8d9590"/><rect x="23" y="50" width="3" height="3" fill="#3a8aa0"/><path d="M34 44 Q42 48 48 58 L58 74 L52 78 L42 64 Q36 56 32 52Z" fill="#e4dabb"/><path d="M42 56 L48 53 L51 60 L45 63Z" fill="#3fa07a"/><path d="M47 64 L53 61 L55 66 L50 69Z" fill="#6a7a70"/><path d="M51 70 L58 68 L60 80 L53 82Z" fill="#3a4040"/><path d="M29 58 Q32 66 36 74" stroke="#222" stroke-width="0.7" fill="none"/><circle cx="36.5" cy="75" r="1" fill="#4aa8d8"/></g><g transform="translate(149.6 17.4) scale(0.699)"><g transform="translate(-6.42 -6.76) scale(1.69)"><path d="M7.85 4 V20.5 Q7.85 22.8 10.5 22.8 H12.6" fill="none" stroke="#fff" stroke-width="3.8"/><rect x="3.8" y="8.2" width="9" height="2.9" fill="#fff"/><path d="M15.2 15.6 H27.8 A6.4 6.4 0 1 0 25.6 21.2" fill="none" stroke="#fff" stroke-width="3.0"/><rect x="31.2" y="4" width="3.8" height="20.7" fill="#fff"/><rect x="41.9" y="7.1" width="3.8" height="3.2" fill="#fff"/><rect x="38.3" y="10.3" width="3.6" height="3.5" fill="#fff"/><rect x="35" y="13.8" width="3.3" height="3.4" fill="#eee"/><rect x="38.3" y="17.2" width="3.6" height="3.3" fill="#fff"/><rect x="41.9" y="20.5" width="3.8" height="4.2" fill="#fff"/><path d="M48.85 8.2 V17.2 A5.1 5.1 0 0 0 59.05 17.2 M59.05 8.2 V24.6" fill="none" stroke="#5ec4b0" stroke-width="3.9"/><path d="M73.6 11.2 Q71.5 9.9 69 9.9 Q64.9 9.9 64.9 12.8 Q64.9 15.2 69.2 16.3 Q73.4 17.4 73.4 20.2 Q73.4 22.7 69 22.7 Q65.8 22.7 63.9 21" fill="none" stroke="#5ec4b0" stroke-width="3.6"/></g><rect x="125" y="7" width="1.3" height="28" fill="#ddd"/><text x="129.5" y="20" font-size="16" font-weight="bold" fill="#fff" font-family="Liberation Sans" textLength="21.5" lengthAdjust="spacingAndGlyphs">20</text><text x="129.5" y="35.5" font-size="16" font-weight="bold" fill="#5ec4b0" font-family="Liberation Sans" textLength="21.5" lengthAdjust="spacingAndGlyphs">25</text><text x="1" y="59.5" font-size="22.5" fill="#fff" font-family="Liberation Sans" textLength="88" lengthAdjust="spacingAndGlyphs" stroke="#fff" stroke-width="0.3">Culture</text><text x="97" y="59.5" font-size="22.5" font-weight="bold" fill="#fff" font-family="Liberation Sans" textLength="52" lengthAdjust="spacingAndGlyphs">Fest</text></g></svg>
<div style="position:absolute;left:1268.4px;top:488px;width:63.6px;height:20px;background:#f0f0f0;border-radius:10px"></div>
<span class="t" style="left:1272.46px;top:492.05px;font-size:12.50px;color:#555;font-weight:normal;transform:scaleX(1.0426);transform-origin:0 0;">MD-3828</span>
<span class="t" style="left:1336.93px;top:493.20px;font-size:12.60px;color:#555;font-weight:normal;transform:scaleX(0.9320);transform-origin:0 0;">8.65MB</span>
<svg style="position:absolute;left:1534px;top:490px;overflow:visible" width="16" height="16" viewBox="0 0 16 16"><path d="M6.5 2.9 H3.4 Q0.9 2.9 0.9 5.4 V11.3 Q0.9 13.8 3.4 13.8 H9.6 Q12.1 13.8 12.1 11.3 V8.4" fill="none" stroke="#444" stroke-width="1.9" stroke-linecap="round"/><path d="M3.7 10.7 L4.5 7.5 L11.5 0.5 Q12.5 -0.3 13.5 0.5 L14.5 1.5 Q15.3 2.5 14.5 3.5 L7.5 10.3 Z" fill="#444"/><path d="M10.6 1.6 L13.4 4.4" stroke="#fff" stroke-width="0.5" opacity="0.6"/></svg>
<div style="position:absolute;left:1512px;top:621px;width:44px;height:22px;background:#3aaa78;border-radius:11px"></div>
<svg style="position:absolute;left:1512px;top:621px;" width="44" height="22" viewBox="0 0 44 22"><path d="M15 7.3 L21.5 4 L28 7.3 L21.5 10.5 Z M15 7.3 V10.4 L21.5 13.6 L28 10.4 V7.3 M15 10.4 V13.5 L21.5 16.8 L28 13.5 V10.4" fill="none" stroke="#fff" stroke-width="1" stroke-linejoin="round"/></svg>
<svg style="position:absolute;left:1268.8px;top:660px;" width="15" height="10" viewBox="0 0 15 10"><rect x="0" y="0" width="10" height="10" rx="2" fill="#444"/><path d="M10.5 3.5 L14.5 0.8 V9.2 L10.5 6.5Z" fill="#444"/></svg>
<span class="t" style="left:1297.71px;top:656.85px;font-size:18.90px;color:#444;font-weight:normal;transform:scaleX(1.1071);transform-origin:0 0;-webkit-text-stroke:0.70px #444;">Led horizontal .mp4</span>
<div style="position:absolute;left:1573px;top:475px;width:302px;height:206px;box-sizing:border-box;border:1px solid #d2d2d2;border-radius:5px;background:#fff"></div>
<div style="position:absolute;left:1574px;top:519.5px;width:300px;height:132px;background:#f8f8f8"></div>
<svg style="position:absolute;left:1607px;top:520px;overflow:hidden" width="234" height="132" viewBox="0 0 234 132"><defs><radialGradient id="g13_gl" cx="0.5" cy="0.5" r="0.5"><stop offset="0" stop-color="#336e60" stop-opacity="1"/><stop offset="0.35" stop-color="#24503f" stop-opacity="0.8"/><stop offset="0.7" stop-color="#132a24" stop-opacity="0.45"/><stop offset="1" stop-color="#000" stop-opacity="0"/></radialGradient><linearGradient id="g13_sl" x1="0" x2="1" y1="0" y2="0"><stop offset="0" stop-color="#3d8c9a"/><stop offset="0.6" stop-color="#1b4a6a"/><stop offset="1" stop-color="#0b1e33"/></linearGradient><linearGradient id="g13_sr" x1="0" x2="1" y1="0" y2="0"><stop offset="0" stop-color="#0b1e33"/><stop offset="0.5" stop-color="#1b4a6a"/><stop offset="1" stop-color="#4ea3aa"/></linearGradient><linearGradient id="g13_ring" x1="0.15" x2="0.85" y1="0.1" y2="0.9"><stop offset="0" stop-color="#0c2636"/><stop offset="0.5" stop-color="#1a4f70"/><stop offset="1" stop-color="#5ab8b0"/></linearGradient></defs><rect width="234" height="132" fill="#000"/><circle cx="208" cy="12" r="95" fill="url(#g13_gl)"/><circle cx="25" cy="95" r="90" fill="url(#g13_gl)"/><path d="M0 9.5 H98 L108 21.5 H0Z" fill="url(#g13_sl)"/><path d="M0 38.2 H44 L56 53.8 H0Z" fill="url(#g13_sl)"/><path d="M215.4 88.4 H234 V107.5 H201.4Z" fill="url(#g13_sr)"/><path d="M143 118 H234 V126.6 H137Z" fill="url(#g13_sr)"/><circle cx="115.4" cy="68" r="60" fill="url(#g13_ring)"/><circle cx="115.4" cy="68" r="47.40" fill="#0b1414"/><circle cx="115.4" cy="68" r="46.50" fill="#dcdcdc"/><circle cx="115.4" cy="68" r="45.30" fill="#000"/><circle cx="115.4" cy="68" r="43.20" fill="#5ec4b0"/><path d="M75.80 56.00 Q88.40 38.00 106.40 36.80 Q121.40 21.20 136.40 35.00 Q151.40 41.00 157.40 54.80 L148.40 65.00 Q133.40 53.00 118.40 60.80 Q94.40 69.20 75.80 56.00Z" fill="#000"/><path d="M120.20 26.60 A14.40 14.40 0 0 1 133.40 47.00" fill="none" stroke="#5ec4b0" stroke-width="1.50"/><circle cx="81.80" cy="45.20" r="6.60" fill="#5ec4b0"/><text x="120.20" y="48.20" font-size="20.40" font-weight="bold" fill="#fff" text-anchor="middle" font-family="Liberation Sans">k</text><clipPath id="g14"><circle cx="115.4" cy="68" r="44.40"/></clipPath><g clip-path="url(#g14)"><g transform="translate(115.40 105.20) scale(1 1.75)"><text x="0" y="0" font-size="36.00" font-weight="bold" fill="#5ec4b0" stroke="#000" stroke-width="4.80" paint-order="stroke" text-anchor="middle" font-family="Liberation Sans" textLength="78.00" lengthAdjust="spacingAndGlyphs">VIBES</text></g></g></svg>
<div style="position:absolute;left:1580.4px;top:488px;width:63.6px;height:20px;background:#f0f0f0;border-radius:10px"></div>
<span class="t" style="left:1584.46px;top:492.05px;font-size:12.50px;color:#555;font-weight:normal;transform:scaleX(1.0426);transform-origin:0 0;">MD-3826</span>
<span class="t" style="left:1649.17px;top:493.20px;font-size:12.60px;color:#555;font-weight:normal;transform:scaleX(0.9265);transform-origin:0 0;">4.23MB</span>
<svg style="position:absolute;left:1846px;top:490px;overflow:visible" width="16" height="16" viewBox="0 0 16 16"><path d="M6.5 2.9 H3.4 Q0.9 2.9 0.9 5.4 V11.3 Q0.9 13.8 3.4 13.8 H9.6 Q12.1 13.8 12.1 11.3 V8.4" fill="none" stroke="#444" stroke-width="1.9" stroke-linecap="round"/><path d="M3.7 10.7 L4.5 7.5 L11.5 0.5 Q12.5 -0.3 13.5 0.5 L14.5 1.5 Q15.3 2.5 14.5 3.5 L7.5 10.3 Z" fill="#444"/><path d="M10.6 1.6 L13.4 4.4" stroke="#fff" stroke-width="0.5" opacity="0.6"/></svg>
<div style="position:absolute;left:1824px;top:621px;width:44px;height:22px;background:#3aaa78;border-radius:11px"></div>
<svg style="position:absolute;left:1824px;top:621px;" width="44" height="22" viewBox="0 0 44 22"><path d="M15 7.3 L21.5 4 L28 7.3 L21.5 10.5 Z M15 7.3 V10.4 L21.5 13.6 L28 10.4 V7.3 M15 10.4 V13.5 L21.5 16.8 L28 13.5 V10.4" fill="none" stroke="#fff" stroke-width="1" stroke-linejoin="round"/></svg>
<svg style="position:absolute;left:1580.8px;top:660px;" width="15" height="10" viewBox="0 0 15 10"><rect x="0" y="0" width="10" height="10" rx="2" fill="#444"/><path d="M10.5 3.5 L14.5 0.8 V9.2 L10.5 6.5Z" fill="#444"/></svg>
<span class="t" style="left:1609.54px;top:656.85px;font-size:18.90px;color:#444;font-weight:normal;transform:scaleX(1.0811);transform-origin:0 0;-webkit-text-stroke:0.70px #444;">Logos 1-2.mp4</span>
<div style="position:absolute;left:323px;top:712px;width:302px;height:206px;box-sizing:border-box;border:1px solid #d2d2d2;border-radius:5px;background:#fff"></div>
<div style="position:absolute;left:324px;top:756.5px;width:300px;height:132px;background:#f8f8f8"></div>
<svg style="position:absolute;left:455px;top:757px;overflow:hidden" width="39" height="132" viewBox="0 0 39 132"><defs><radialGradient id="g15_gl" cx="0.5" cy="0.5" r="0.5"><stop offset="0" stop-color="#336e60" stop-opacity="1"/><stop offset="0.35" stop-color="#24503f" stop-opacity="0.8"/><stop offset="0.7" stop-color="#132a24" stop-opacity="0.45"/><stop offset="1" stop-color="#000" stop-opacity="0"/></radialGradient><linearGradient id="g15_sl" x1="0" x2="1" y1="0" y2="0"><stop offset="0" stop-color="#3d8c9a"/><stop offset="0.6" stop-color="#1b4a6a"/><stop offset="1" stop-color="#0b1e33"/></linearGradient><linearGradient id="g15_sr" x1="0" x2="1" y1="0" y2="0"><stop offset="0" stop-color="#0b1e33"/><stop offset="0.5" stop-color="#1b4a6a"/><stop offset="1" stop-color="#4ea3aa"/></linearGradient><linearGradient id="g15_ring" x1="0.15" x2="0.85" y1="0.1" y2="0.9"><stop offset="0" stop-color="#0c2636"/><stop offset="0.5" stop-color="#1a4f70"/><stop offset="1" stop-color="#5ab8b0"/></linearGradient></defs><rect width="39" height="132" fill="#000"/><circle cx="36" cy="2" r="40" fill="url(#g15_gl)"/><circle cx="2" cy="120" r="40" fill="url(#g15_gl)"/><defs><linearGradient id="g15_h" x1="0" x2="1" y1="0" y2="1"><stop offset="0" stop-color="#e0e0e0"/><stop offset="1" stop-color="#5a5e60"/></linearGradient></defs><rect x="0" y="9" width="6" height="3" fill="url(#g15_sl)"/><rect x="0" y="16" width="8" height="3" fill="url(#g15_sl)"/><rect x="25" y="41" width="14" height="3" fill="url(#g15_sr)"/><rect x="23" y="48" width="16" height="2.2" fill="url(#g15_sr)"/><path d="M4 0 H21 Q31 8 34 22 Q24 17 15 12 Q7 7 4 0Z" fill="#b5e6a8" stroke="#f0a850" stroke-width="1.3"/><circle cx="8" cy="1.5" r="3.2" fill="#6a52a8"/><g transform="translate(4.5 22) scale(0.2052980132450331)"><g transform="translate(-6.42 -6.76) scale(1.69)"><path d="M7.85 4 V20.5 Q7.85 22.8 10.5 22.8 H12.6" fill="none" stroke="#fff" stroke-width="3.8"/><rect x="3.8" y="8.2" width="9" height="2.9" fill="#fff"/><path d="M15.2 15.6 H27.8 A6.4 6.4 0 1 0 25.6 21.2" fill="none" stroke="#fff" stroke-width="3.0"/><rect x="31.2" y="4" width="3.8" height="20.7" fill="#fff"/><rect x="41.9" y="7.1" width="3.8" height="3.2" fill="#fff"/><rect x="38.3" y="10.3" width="3.6" height="3.5" fill="#fff"/><rect x="35" y="13.8" width="3.3" height="3.4" fill="#eee"/><rect x="38.3" y="17.2" width="3.6" height="3.3" fill="#fff"/><rect x="41.9" y="20.5" width="3.8" height="4.2" fill="#fff"/><path d="M48.85 8.2 V17.2 A5.1 5.1 0 0 0 59.05 17.2 M59.05 8.2 V24.6" fill="none" stroke="#5ec4b0" stroke-width="3.9"/><path d="M73.6 11.2 Q71.5 9.9 69 9.9 Q64.9 9.9 64.9 12.8 Q64.9 15.2 69.2 16.3 Q73.4 17.4 73.4 20.2 Q73.4 22.7 69 22.7 Q65.8 22.7 63.9 21" fill="none" stroke="#5ec4b0" stroke-width="3.6"/></g><rect x="125" y="7" width="1.3" height="28" fill="#ddd"/><text x="129.5" y="20" font-size="16" font-weight="bold" fill="#fff" font-family="Liberation Sans" textLength="21.5" lengthAdjust="spacingAndGlyphs">20</text><text x="129.5" y="35.5" font-size="16" font-weight="bold" fill="#5ec4b0" font-family="Liberation Sans" textLength="21.5" lengthAdjust="spacingAndGlyphs">25</text><text x="1" y="59.5" font-size="22.5" fill="#fff" font-family="Liberation Sans" textLength="88" lengthAdjust="spacingAndGlyphs" stroke="#fff" stroke-width="0.3">Culture</text><text x="97" y="59.5" font-size="22.5" font-weight="bold" fill="#fff" font-family="Liberation Sans" textLength="52" lengthAdjust="spacingAndGlyphs">Fest</text></g><circle cx="20" cy="62" r="14.5" fill="url(#g15_ring)"/><circle cx="20" cy="62" r="11.46" fill="#0b1414"/><circle cx="20" cy="62" r="11.24" fill="#dcdcdc"/><circle cx="20" cy="62" r="10.95" fill="#000"/><circle cx="20" cy="62" r="10.44" fill="#5ec4b0"/><path d="M10.43 59.10 Q13.47 54.75 17.82 54.46 Q21.45 50.69 25.07 54.02 Q28.70 55.48 30.15 58.81 L27.98 61.27 Q24.35 58.38 20.73 60.26 Q14.93 62.29 10.43 59.10Z" fill="#000"/><path d="M21.16 52.00 A3.48 3.48 0 0 1 24.35 56.92" fill="none" stroke="#5ec4b0" stroke-width="0.36"/><circle cx="11.88" cy="56.49" r="1.59" fill="#5ec4b0"/><text x="21.16" y="57.22" font-size="4.93" font-weight="bold" fill="#fff" text-anchor="middle" font-family="Liberation Sans">k</text><clipPath id="g16"><circle cx="20" cy="62" r="10.73"/></clipPath><g clip-path="url(#g16)"><g transform="translate(20.00 70.99) scale(1 1.75)"><text x="0" y="0" font-size="8.70" font-weight="bold" fill="#5ec4b0" stroke="#000" stroke-width="1.16" paint-order="stroke" text-anchor="middle" font-family="Liberation Sans" textLength="18.85" lengthAdjust="spacingAndGlyphs">VIBES</text></g></g><path d="M0 82 Q8 72 18 74 Q27 78 29 92 L27 132 H0Z" fill="url(#g15_h)"/><path d="M9 92 Q14 82 24 86 Q31 100 27 118 Q16 124 9 112Z" fill="#040909"/><path d="M24 86 Q31 100 27 118" fill="none" stroke="#5ec4b0" stroke-width="1.4"/><circle cx="18" cy="88" r="1.4" fill="#5ec4b0"/><path d="M0 118 Q10 116 20 124 L23 132 H0Z" fill="#3e4c4a"/><path d="M6 124 L16 130" stroke="#5ec4b0" stroke-width="1.2"/></svg>
<div style="position:absolute;left:330.4px;top:725px;width:63.6px;height:20px;background:#f0f0f0;border-radius:10px"></div>
<span class="t" style="left:334.46px;top:729.05px;font-size:12.50px;color:#555;font-weight:normal;transform:scaleX(1.0426);transform-origin:0 0;">MD-3825</span>
<span class="t" style="left:398.60px;top:730.20px;font-size:12.60px;color:#555;font-weight:normal;transform:scaleX(0.8439);transform-origin:0 0;">1.25MB</span>
<svg style="position:absolute;left:596px;top:727px;overflow:visible" width="16" height="16" viewBox="0 0 16 16"><path d="M6.5 2.9 H3.4 Q0.9 2.9 0.9 5.4 V11.3 Q0.9 13.8 3.4 13.8 H9.6 Q12.1 13.8 12.1 11.3 V8.4" fill="none" stroke="#444" stroke-width="1.9" stroke-linecap="round"/><path d="M3.7 10.7 L4.5 7.5 L11.5 0.5 Q12.5 -0.3 13.5 0.5 L14.5 1.5 Q15.3 2.5 14.5 3.5 L7.5 10.3 Z" fill="#444"/><path d="M10.6 1.6 L13.4 4.4" stroke="#fff" stroke-width="0.5" opacity="0.6"/></svg>
<div style="position:absolute;left:574px;top:858px;width:44px;height:22px;background:#3aaa78;border-radius:11px"></div>
<svg style="position:absolute;left:574px;top:858px;" width="44" height="22" viewBox="0 0 44 22"><path d="M15 7.3 L21.5 4 L28 7.3 L21.5 10.5 Z M15 7.3 V10.4 L21.5 13.6 L28 10.4 V7.3 M15 10.4 V13.5 L21.5 16.8 L28 13.5 V10.4" fill="none" stroke="#fff" stroke-width="1" stroke-linejoin="round"/></svg>
<svg style="position:absolute;left:330.8px;top:897px;" width="15" height="10" viewBox="0 0 15 10"><rect x="0" y="0" width="10" height="10" rx="2" fill="#444"/><path d="M10.5 3.5 L14.5 0.8 V9.2 L10.5 6.5Z" fill="#444"/></svg>
<span class="t" style="left:360.97px;top:893.85px;font-size:18.90px;color:#444;font-weight:normal;transform:scaleX(1.1606);transform-origin:0 0;-webkit-text-stroke:0.70px #444;">Totem.mp4</span>
<div style="position:absolute;left:636px;top:712px;width:302px;height:206px;box-sizing:border-box;border:1px solid #d2d2d2;border-radius:5px;background:#fff"></div>
<div style="position:absolute;left:637px;top:756.5px;width:300px;height:132px;background:#f8f8f8"></div>
<svg style="position:absolute;left:669px;top:757px;overflow:hidden" width="235" height="132" viewBox="0 0 235 132"><defs><linearGradient id="g17_bg" x1="0" x2="1" y1="0" y2="0.8"><stop offset="0" stop-color="#000"/><stop offset="0.4" stop-color="#022c26"/><stop offset="0.72" stop-color="#076353"/><stop offset="1" stop-color="#0ea38b"/></linearGradient><linearGradient id="g17_c" x1="0" x2="0" y1="0" y2="1"><stop offset="0" stop-color="#19c0a2"/><stop offset="0.55" stop-color="#07564b"/><stop offset="1" stop-color="#032e28"/></linearGradient><clipPath id="g17_cl"><circle cx="62.5" cy="75.7" r="44"/><rect x="0" y="0" width="235" height="62"/></clipPath></defs><rect width="235" height="132" fill="url(#g17_bg)"/><circle cx="62.9" cy="74.6" r="51" fill="none" stroke="#fff" stroke-width="2.4"/><circle cx="62.5" cy="75.7" r="44" fill="url(#g17_c)"/><g clip-path="url(#g17_cl)"><path d="M50 112 L50 40 Q52 16 72 14 Q90 16 90 40 L88 70 L80 70 L82 40 Q72 30 60 40 L58 112Z" fill="#1b1311"/><path d="M22 104 Q30 80 58 76 L82 76 Q104 80 110 98 Q96 124 66 124 Q38 122 22 104Z" fill="#15161b"/><path d="M63 60 L78 60 L77 78 Q70 84 64 78Z" fill="#b07c66"/><ellipse cx="70" cy="45" rx="15" ry="20" fill="#c8937a"/><path d="M54 40 Q56 18 72 18 Q86 20 86 36 Q76 26 60 34Z" fill="#1b1311"/><path d="M52 40 L55 110 L49 110Z" fill="#1b1311"/><rect x="63" y="52.5" width="11" height="2.2" rx="1" fill="#c0504e"/></g><circle cx="177" cy="23.8" r="20.5" fill="none" stroke="#d8efe9" stroke-width="1"/><circle cx="177" cy="23.8" r="16.5" fill="#0a0a0a"/><text x="177" y="27" font-size="8.5" font-weight="bold" fill="#ddd" text-anchor="middle" font-family="Liberation Sans">tek<tspan fill="#5ec4b0">us</tspan></text><text x="177" y="53" font-size="7.2" font-weight="bold" fill="#fff" text-anchor="middle" font-family="Liberation Sans" textLength="76" lengthAdjust="spacingAndGlyphs">¡Feliz Cumpleaños!</text><text x="177" y="62.5" font-size="7.2" font-weight="bold" fill="#fff" text-anchor="middle" font-family="Liberation Sans" textLength="66" lengthAdjust="spacingAndGlyphs">Andrea Gutiérrez</text><text x="177" y="74" font-size="4.5" font-weight="bold" fill="#fff" text-anchor="middle" font-family="Liberation Sans">Devisalvavidas!</text><rect x="133" y="79.5" width="92" height="2" fill="#d8eeea" opacity="0.45"/><rect x="131" y="86" width="48" height="2" fill="#cfe8e2" opacity="0.45"/><rect x="20" y="25" width="1.6" height="1.6" fill="#4a6ae0"/><rect x="182" y="98" width="1.6" height="1.6" fill="#e0c050"/><rect x="12" y="100" width="1.6" height="1.6" fill="#e0e040"/><rect x="24" y="115" width="1.6" height="1.6" fill="#e04060"/><rect x="160" y="118" width="1.6" height="1.6" fill="#50c0e0"/><rect x="208" y="108" width="1.6" height="1.6" fill="#e08040"/><rect x="105" y="60" width="1.6" height="1.6" fill="#4a4ad0"/></svg>
<div style="position:absolute;left:643.4px;top:725px;width:63.6px;height:20px;background:#f0f0f0;border-radius:10px"></div>
<span class="t" style="left:647.46px;top:729.05px;font-size:12.50px;color:#555;font-weight:normal;transform:scaleX(1.0387);transform-origin:0 0;">MD-3824</span>
<span class="t" style="left:711.57px;top:730.20px;font-size:12.60px;color:#555;font-weight:normal;transform:scaleX(0.8746);transform-origin:0 0;">10.97MB</span>
<svg style="position:absolute;left:909px;top:727px;overflow:visible" width="16" height="16" viewBox="0 0 16 16"><path d="M6.5 2.9 H3.4 Q0.9 2.9 0.9 5.4 V11.3 Q0.9 13.8 3.4 13.8 H9.6 Q12.1 13.8 12.1 11.3 V8.4" fill="none" stroke="#444" stroke-width="1.9" stroke-linecap="round"/><path d="M3.7 10.7 L4.5 7.5 L11.5 0.5 Q12.5 -0.3 13.5 0.5 L14.5 1.5 Q15.3 2.5 14.5 3.5 L7.5 10.3 Z" fill="#444"/><path d="M10.6 1.6 L13.4 4.4" stroke="#fff" stroke-width="0.5" opacity="0.6"/></svg>
<div style="position:absolute;left:887px;top:858px;width:44px;height:22px;background:#fcd99b;border-radius:11px"></div>
<svg style="position:absolute;left:887px;top:858px;" width="44" height="22" viewBox="0 0 44 22"><path d="M15 7.3 L21.5 4 L28 7.3 L21.5 10.5 Z M15 7.3 V10.4 L21.5 13.6 L28 10.4 V7.3 M15 10.4 V13.5 L21.5 16.8 L28 13.5 V10.4" fill="none" stroke="#555" stroke-width="1" stroke-linejoin="round"/></svg>
<svg style="position:absolute;left:643.8px;top:897px;" width="15" height="10" viewBox="0 0 15 10"><rect x="0" y="0" width="10" height="10" rx="2" fill="#444"/><path d="M10.5 3.5 L14.5 0.8 V9.2 L10.5 6.5Z" fill="#444"/></svg>
<span class="t" style="left:673.89px;top:893.85px;font-size:18.90px;color:#444;font-weight:normal;transform:scaleX(1.1047);transform-origin:0 0;-webkit-text-stroke:0.70px #444;">Andre Gutiérrez.mp4</span>
<div style="position:absolute;left:948px;top:712px;width:302px;height:206px;box-sizing:border-box;border:1px solid #d2d2d2;border-radius:5px;background:#fff"></div>
<div style="position:absolute;left:949px;top:756.5px;width:300px;height:132px;background:#f8f8f8"></div>
<svg style="position:absolute;left:982px;top:757px;overflow:hidden" width="234" height="132" viewBox="0 0 234 132"><defs><radialGradient id="g18_gl" cx="0.5" cy="0.5" r="0.5"><stop offset="0" stop-color="#336e60" stop-opacity="1"/><stop offset="0.35" stop-color="#24503f" stop-opacity="0.8"/><stop offset="0.7" stop-color="#132a24" stop-opacity="0.45"/><stop offset="1" stop-color="#000" stop-opacity="0"/></radialGradient><linearGradient id="g18_sl" x1="0" x2="1" y1="0" y2="0"><stop offset="0" stop-color="#3d8c9a"/><stop offset="0.6" stop-color="#1b4a6a"/><stop offset="1" stop-color="#0b1e33"/></linearGradient><linearGradient id="g18_sr" x1="0" x2="1" y1="0" y2="0"><stop offset="0" stop-color="#0b1e33"/><stop offset="0.5" stop-color="#1b4a6a"/><stop offset="1" stop-color="#4ea3aa"/></linearGradient><linearGradient id="g18_ring" x1="0.15" x2="0.85" y1="0.1" y2="0.9"><stop offset="0" stop-color="#0c2636"/><stop offset="0.5" stop-color="#1a4f70"/><stop offset="1" stop-color="#5ab8b0"/></linearGradient></defs><rect width="234" height="132" fill="#000"/><path d="M170 0 H182 L234 44 V56Z" fill="#123a3a"/><path d="M192 0 H204 L234 26 V36Z" fill="#0e2e30"/><defs><linearGradient id="g18_t" x1="0" x2="1"><stop offset="0" stop-color="#2c7a70"/><stop offset="1" stop-color="#000" stop-opacity="0"/></linearGradient></defs><path d="M0 79 H75 L88 96 H0Z" fill="url(#g18_t)"/><path d="M0 112 H130 L142 123 H0Z" fill="url(#g18_t)"/><circle cx="117.3" cy="33.9" r="27" fill="url(#g18_ring)"/><circle cx="117.3" cy="33.9" r="21.33" fill="#0b1414"/><circle cx="117.3" cy="33.9" r="20.93" fill="#dcdcdc"/><circle cx="117.3" cy="33.9" r="20.39" fill="#000"/><circle cx="117.3" cy="33.9" r="19.44" fill="#5ec4b0"/><path d="M99.48 28.50 Q105.15 20.40 113.25 19.86 Q120.00 12.84 126.75 19.05 Q133.50 21.75 136.20 27.96 L132.15 32.55 Q125.40 27.15 118.65 30.66 Q107.85 34.44 99.48 28.50Z" fill="#000"/><path d="M119.46 15.27 A6.48 6.48 0 0 1 125.40 24.45" fill="none" stroke="#5ec4b0" stroke-width="0.68"/><circle cx="102.18" cy="23.64" r="2.97" fill="#5ec4b0"/><text x="119.46" y="24.99" font-size="9.18" font-weight="bold" fill="#fff" text-anchor="middle" font-family="Liberation Sans">k</text><clipPath id="g19"><circle cx="117.3" cy="33.9" r="19.98"/></clipPath><g clip-path="url(#g19)"><g transform="translate(117.30 50.64) scale(1 1.75)"><text x="0" y="0" font-size="16.20" font-weight="bold" fill="#5ec4b0" stroke="#000" stroke-width="2.16" paint-order="stroke" text-anchor="middle" font-family="Liberation Sans" textLength="35.10" lengthAdjust="spacingAndGlyphs">VIBES</text></g></g><g transform="translate(183 5.8) scale(0.24503311258278146)"><g transform="translate(-6.42 -6.76) scale(1.69)"><path d="M7.85 4 V20.5 Q7.85 22.8 10.5 22.8 H12.6" fill="none" stroke="#fff" stroke-width="3.8"/><rect x="3.8" y="8.2" width="9" height="2.9" fill="#fff"/><path d="M15.2 15.6 H27.8 A6.4 6.4 0 1 0 25.6 21.2" fill="none" stroke="#fff" stroke-width="3.0"/><rect x="31.2" y="4" width="3.8" height="20.7" fill="#fff"/><rect x="41.9" y="7.1" width="3.8" height="3.2" fill="#fff"/><rect x="38.3" y="10.3" width="3.6" height="3.5" fill="#fff"/><rect x="35" y="13.8" width="3.3" height="3.4" fill="#eee"/><rect x="38.3" y="17.2" width="3.6" height="3.3" fill="#fff"/><rect x="41.9" y="20.5" width="3.8" height="4.2" fill="#fff"/><path d="M48.85 8.2 V17.2 A5.1 5.1 0 0 0 59.05 17.2 M59.05 8.2 V24.6" fill="none" stroke="#5ec4b0" stroke-width="3.9"/><path d="M73.6 11.2 Q71.5 9.9 69 9.9 Q64.9 9.9 64.9 12.8 Q64.9 15.2 69.2 16.3 Q73.4 17.4 73.4 20.2 Q73.4 22.7 69 22.7 Q65.8 22.7 63.9 21" fill="none" stroke="#5ec4b0" stroke-width="3.6"/></g><rect x="125" y="7" width="1.3" height="28" fill="#ddd"/><text x="129.5" y="20" font-size="16" font-weight="bold" fill="#fff" font-family="Liberation Sans" textLength="21.5" lengthAdjust="spacingAndGlyphs">20</text><text x="129.5" y="35.5" font-size="16" font-weight="bold" fill="#5ec4b0" font-family="Liberation Sans" textLength="21.5" lengthAdjust="spacingAndGlyphs">25</text><text x="1" y="59.5" font-size="22.5" fill="#fff" font-family="Liberation Sans" textLength="88" lengthAdjust="spacingAndGlyphs" stroke="#fff" stroke-width="0.3">Culture</text><text x="97" y="59.5" font-size="22.5" font-weight="bold" fill="#fff" font-family="Liberation Sans" textLength="52" lengthAdjust="spacingAndGlyphs">Fest</text></g><text x="36.4" y="91" font-size="17" font-weight="bold" fill="#fff" font-family="Liberation Sans" textLength="153" lengthAdjust="spacingAndGlyphs">¡El <tspan fill="#5ec4b0">despegue</tspan> está</text><text x="58.6" y="116.4" font-size="17" font-weight="bold" fill="#fff" font-family="Liberation Sans" textLength="108" lengthAdjust="spacingAndGlyphs">confirmado!</text></svg>
<div style="position:absolute;left:955.4px;top:725px;width:63.6px;height:20px;background:#f0f0f0;border-radius:10px"></div>
<span class="t" style="left:959.46px;top:729.05px;font-size:12.50px;color:#555;font-weight:normal;transform:scaleX(1.0426);transform-origin:0 0;">MD-3823</span>
<span class="t" style="left:1023.80px;top:730.20px;font-size:12.60px;color:#555;font-weight:normal;transform:scaleX(0.9524);transform-origin:0 0;">22.99MB</span>
<svg style="position:absolute;left:1221px;top:727px;overflow:visible" width="16" height="16" viewBox="0 0 16 16"><path d="M6.5 2.9 H3.4 Q0.9 2.9 0.9 5.4 V11.3 Q0.9 13.8 3.4 13.8 H9.6 Q12.1 13.8 12.1 11.3 V8.4" fill="none" stroke="#444" stroke-width="1.9" stroke-linecap="round"/><path d="M3.7 10.7 L4.5 7.5 L11.5 0.5 Q12.5 -0.3 13.5 0.5 L14.5 1.5 Q15.3 2.5 14.5 3.5 L7.5 10.3 Z" fill="#444"/><path d="M10.6 1.6 L13.4 4.4" stroke="#fff" stroke-width="0.5" opacity="0.6"/></svg>
<div style="position:absolute;left:1199px;top:858px;width:44px;height:22px;background:#a6efc9;border-radius:11px"></div>
<svg style="position:absolute;left:1199px;top:858px;" width="44" height="22" viewBox="0 0 44 22"><path d="M15 7.3 L21.5 4 L28 7.3 L21.5 10.5 Z M15 7.3 V10.4 L21.5 13.6 L28 10.4 V7.3 M15 10.4 V13.5 L21.5 16.8 L28 13.5 V10.4" fill="none" stroke="#555" stroke-width="1" stroke-linejoin="round"/></svg>
<svg style="position:absolute;left:955.8px;top:897px;" width="15" height="10" viewBox="0 0 15 10"><rect x="0" y="0" width="10" height="10" rx="2" fill="#444"/><path d="M10.5 3.5 L14.5 0.8 V9.2 L10.5 6.5Z" fill="#444"/></svg>
<span class="t" style="left:985.37px;top:893.85px;font-size:18.90px;color:#444;font-weight:normal;transform:scaleX(1.0576);transform-origin:0 0;-webkit-text-stroke:0.70px #444;">Comunicado Vibes 31 Ene...</span>
<div style="position:absolute;left:1261px;top:712px;width:302px;height:206px;box-sizing:border-box;border:1px solid #d2d2d2;border-radius:5px;background:#fff"></div>
<div style="position:absolute;left:1262px;top:756.5px;width:300px;height:132px;background:#f8f8f8"></div>
<svg style="position:absolute;left:1374px;top:757px;overflow:hidden" width="75" height="132" viewBox="0 0 75 132"><defs><radialGradient id="g20_k" cx="50.5" cy="40" r="44" gradientUnits="userSpaceOnUse"><stop offset="0" stop-color="#6e6e6e"/><stop offset="0.4" stop-color="#2c2c2c"/><stop offset="1" stop-color="#000"/></radialGradient></defs><rect width="75" height="132" fill="#000"/><rect width="75" height="132" fill="url(#g20_k)"/><rect x="9" y="41" width="50" height="52" fill="#000" opacity="0.6"/><path d="M24.5 72 V39.5 L57.5 49.5 L60 83 L33 76.5" fill="none" stroke="#3fa493" stroke-width="3"/><rect x="25" y="74" width="3" height="3" fill="#3fa493"/><rect x="28" y="77" width="3" height="3" fill="#3fa493"/><rect x="25" y="80" width="3" height="3" fill="#3fa493"/><rect x="22" y="83" width="3" height="3" fill="#3fa493"/><rect x="25" y="86" width="3" height="3" fill="#2d7f72"/><rect x="35.7" y="52" width="4.3" height="23" fill="#3fa493"/><rect x="40" y="62" width="3.5" height="3.5" fill="#3fa493"/><rect x="43.5" y="58.5" width="3.5" height="3.5" fill="#3fa493"/><rect x="43.5" y="65.5" width="3.5" height="3.5" fill="#3fa493"/><rect x="47" y="69" width="3.5" height="3.5" fill="#3fa493"/><path d="M56 50 L59 84" stroke="#a8e0d6" stroke-width="0.8" opacity="0.7"/></svg>
<div style="position:absolute;left:1268.4px;top:725px;width:63.6px;height:20px;background:#f0f0f0;border-radius:10px"></div>
<span class="t" style="left:1272.46px;top:729.05px;font-size:12.50px;color:#555;font-weight:normal;transform:scaleX(1.0439);transform-origin:0 0;">MD-3822</span>
<span class="t" style="left:1336.84px;top:730.20px;font-size:12.60px;color:#555;font-weight:normal;transform:scaleX(0.8936);transform-origin:0 0;">669.01KB</span>
<svg style="position:absolute;left:1534px;top:727px;overflow:visible" width="16" height="16" viewBox="0 0 16 16"><path d="M6.5 2.9 H3.4 Q0.9 2.9 0.9 5.4 V11.3 Q0.9 13.8 3.4 13.8 H9.6 Q12.1 13.8 12.1 11.3 V8.4" fill="none" stroke="#444" stroke-width="1.9" stroke-linecap="round"/><path d="M3.7 10.7 L4.5 7.5 L11.5 0.5 Q12.5 -0.3 13.5 0.5 L14.5 1.5 Q15.3 2.5 14.5 3.5 L7.5 10.3 Z" fill="#444"/><path d="M10.6 1.6 L13.4 4.4" stroke="#fff" stroke-width="0.5" opacity="0.6"/></svg>
<div style="position:absolute;left:1512px;top:858px;width:44px;height:22px;background:#d9d9d9;border-radius:11px"></div>
<svg style="position:absolute;left:1512px;top:858px;" width="44" height="22" viewBox="0 0 44 22"><path d="M15 7.3 L21.5 4 L28 7.3 L21.5 10.5 Z M15 7.3 V10.4 L21.5 13.6 L28 10.4 V7.3 M15 10.4 V13.5 L21.5 16.8 L28 13.5 V10.4" fill="none" stroke="#555" stroke-width="1" stroke-linejoin="round"/></svg>
<svg style="position:absolute;left:1269.5px;top:895.5px;" width="14" height="12" viewBox="0 0 14 12"><rect x="0" y="0" width="14" height="12" rx="1.5" fill="#444"/><path d="M2 10.5 L5.5 5.5 L8 8 L9.8 6.5 L12 10.5Z" fill="#fff"/><circle cx="4" cy="3.5" r="1.3" fill="#fff"/></svg>
<span class="t" style="left:1297.68px;top:893.85px;font-size:18.90px;color:#444;font-weight:normal;transform:scaleX(1.1369);transform-origin:0 0;-webkit-text-stroke:0.70px #444;">K vertical.png</span>
<div style="position:absolute;left:1573px;top:712px;width:302px;height:206px;box-sizing:border-box;border:1px solid #d2d2d2;border-radius:5px;background:#fff"></div>
<div style="position:absolute;left:1574px;top:756.5px;width:300px;height:132px;background:#f8f8f8"></div>
<svg style="position:absolute;left:1607px;top:757px;overflow:hidden" width="234" height="132" viewBox="0 0 234 132"><defs><linearGradient id="g21_w" x1="0" x2="205" y1="0" y2="0" gradientUnits="userSpaceOnUse"><stop offset="0" stop-color="#6cc9b2" stop-opacity="0.9"/><stop offset="0.55" stop-color="#6cc9b2" stop-opacity="0.7"/><stop offset="0.85" stop-color="#6cc9b2" stop-opacity="0.15"/><stop offset="1" stop-color="#6cc9b2" stop-opacity="0"/></linearGradient></defs><rect width="234" height="132" fill="#0c0c0c"/><path d="M0.0 58.0 C30.0 50.0 60.0 18.0 88.0 22.0 C115.0 26.0 125.0 48.0 150.0 50.0 C170.0 52.0 185.0 44.0 205.0 42.0" fill="none" stroke="url(#g21_w)" stroke-width="0.6"/><path d="M0.0 61.0 C30.6 53.1 60.6 21.9 88.4 25.5 C115.6 29.1 125.9 49.5 150.6 50.9 C170.3 52.4 185.3 44.9 205.0 43.0" fill="none" stroke="url(#g21_w)" stroke-width="0.6"/><path d="M0.0 64.0 C31.2 56.2 61.2 25.8 88.9 29.0 C116.2 32.2 126.9 51.0 151.2 51.8 C170.6 52.8 185.6 45.8 205.0 44.0" fill="none" stroke="url(#g21_w)" stroke-width="0.6"/><path d="M0.0 67.0 C31.9 59.4 61.9 29.6 89.3 32.5 C116.9 35.4 127.8 52.5 151.9 52.6 C170.9 53.1 185.9 46.6 205.0 45.0" fill="none" stroke="url(#g21_w)" stroke-width="0.6"/><path d="M0.0 70.0 C32.5 62.5 62.5 33.5 89.8 36.0 C117.5 38.5 128.8 54.0 152.5 53.5 C171.2 53.5 186.2 47.5 205.0 46.0" fill="none" stroke="url(#g21_w)" stroke-width="0.6"/><path d="M0.0 73.0 C33.1 65.6 63.1 37.4 90.2 39.5 C118.1 41.6 129.7 55.5 153.1 54.4 C171.6 53.9 186.6 48.4 205.0 47.0" fill="none" stroke="url(#g21_w)" stroke-width="0.6"/><path d="M0.0 76.0 C33.8 68.8 63.8 41.2 90.6 43.0 C118.8 44.8 130.6 57.0 153.8 55.2 C171.9 54.2 186.9 49.2 205.0 48.0" fill="none" stroke="url(#g21_w)" stroke-width="0.6"/><path d="M0.0 79.0 C34.4 71.9 64.4 45.1 91.1 46.5 C119.4 47.9 131.6 58.5 154.4 56.1 C172.2 54.6 187.2 50.1 205.0 49.0" fill="none" stroke="url(#g21_w)" stroke-width="0.6"/><path d="M0.0 82.0 C35.0 75.0 65.0 49.0 91.5 50.0 C120.0 51.0 132.5 60.0 155.0 57.0 C172.5 55.0 187.5 51.0 205.0 50.0" fill="none" stroke="url(#g21_w)" stroke-width="0.6"/><path d="M0.0 85.0 C35.6 78.1 65.6 52.9 91.9 53.5 C120.6 54.1 133.4 61.5 155.6 57.9 C172.8 55.4 187.8 51.9 205.0 51.0" fill="none" stroke="url(#g21_w)" stroke-width="0.6"/><path d="M0.0 88.0 C36.2 81.2 66.2 56.8 92.4 57.0 C121.2 57.2 134.4 63.0 156.2 58.8 C173.1 55.8 188.1 52.8 205.0 52.0" fill="none" stroke="url(#g21_w)" stroke-width="0.6"/><path d="M0.0 91.0 C36.9 84.4 66.9 60.6 92.8 60.5 C121.9 60.4 135.3 64.5 156.9 59.6 C173.4 56.1 188.4 53.6 205.0 53.0" fill="none" stroke="url(#g21_w)" stroke-width="0.6"/><path d="M0.0 94.0 C37.5 87.5 67.5 64.5 93.2 64.0 C122.5 63.5 136.2 66.0 157.5 60.5 C173.8 56.5 188.8 54.5 205.0 54.0" fill="none" stroke="url(#g21_w)" stroke-width="0.6"/><path d="M0.0 97.0 C38.1 90.6 68.1 68.4 93.7 67.5 C123.1 66.6 137.2 67.5 158.1 61.4 C174.1 56.9 189.1 55.4 205.0 55.0" fill="none" stroke="url(#g21_w)" stroke-width="0.6"/><path d="M0.0 100.0 C38.8 93.8 68.8 72.2 94.1 71.0 C123.8 69.8 138.1 69.0 158.8 62.2 C174.4 57.2 189.4 56.2 205.0 56.0" fill="none" stroke="url(#g21_w)" stroke-width="0.6"/><path d="M0.0 103.0 C39.4 96.9 69.4 76.1 94.6 74.5 C124.4 72.9 139.1 70.5 159.4 63.1 C174.7 57.6 189.7 57.1 205.0 57.0" fill="none" stroke="url(#g21_w)" stroke-width="0.6"/><path d="M0.0 106.0 C40.0 100.0 70.0 80.0 95.0 78.0 C125.0 76.0 140.0 72.0 160.0 64.0 C175.0 58.0 190.0 58.0 205.0 58.0" fill="none" stroke="url(#g21_w)" stroke-width="0.6"/><path d="M168 84 V81 H198.5 V107 H186 M176 107 H168 V100" fill="none" stroke="#5fb8a4" stroke-width="2.4"/><path d="M176 107 L171 113 M171 113 L176 118" stroke="#5fb8a4" stroke-width="2.2" fill="none"/><text x="154.6" y="103" font-size="22" font-weight="bold" fill="#c8c8c8" font-family="Liberation Sans" textLength="31" lengthAdjust="spacingAndGlyphs">tek</text><text x="186" y="103" font-size="20" font-weight="bold" fill="#7cc0ae" font-family="Liberation Sans" textLength="30" lengthAdjust="spacingAndGlyphs">us</text></svg>
<div style="position:absolute;left:1580.4px;top:725px;width:60.2px;height:20px;background:#f0f0f0;border-radius:10px"></div>
<span class="t" style="left:1584.52px;top:729.05px;font-size:12.50px;color:#555;font-weight:normal;transform:scaleX(0.9757);transform-origin:0 0;">MD-3821</span>
<span class="t" style="left:1645.80px;top:730.20px;font-size:12.60px;color:#555;font-weight:normal;transform:scaleX(0.8120);transform-origin:0 0;">413.13KB</span>
<svg style="position:absolute;left:1846px;top:727px;overflow:visible" width="16" height="16" viewBox="0 0 16 16"><path d="M6.5 2.9 H3.4 Q0.9 2.9 0.9 5.4 V11.3 Q0.9 13.8 3.4 13.8 H9.6 Q12.1 13.8 12.1 11.3 V8.4" fill="none" stroke="#444" stroke-width="1.9" stroke-linecap="round"/><path d="M3.7 10.7 L4.5 7.5 L11.5 0.5 Q12.5 -0.3 13.5 0.5 L14.5 1.5 Q15.3 2.5 14.5 3.5 L7.5 10.3 Z" fill="#444"/><path d="M10.6 1.6 L13.4 4.4" stroke="#fff" stroke-width="0.5" opacity="0.6"/></svg>
<div style="position:absolute;left:1824px;top:858px;width:44px;height:22px;background:#d9d9d9;border-radius:11px"></div>
<svg style="position:absolute;left:1824px;top:858px;" width="44" height="22" viewBox="0 0 44 22"><path d="M15 7.3 L21.5 4 L28 7.3 L21.5 10.5 Z M15 7.3 V10.4 L21.5 13.6 L28 10.4 V7.3 M15 10.4 V13.5 L21.5 16.8 L28 13.5 V10.4" fill="none" stroke="#555" stroke-width="1" stroke-linejoin="round"/></svg>
<svg style="position:absolute;left:1581.5px;top:895.5px;" width="14" height="12" viewBox="0 0 14 12"><rect x="0" y="0" width="14" height="12" rx="1.5" fill="#444"/><path d="M2 10.5 L5.5 5.5 L8 8 L9.8 6.5 L12 10.5Z" fill="#fff"/><circle cx="4" cy="3.5" r="1.3" fill="#fff"/></svg>
<span class="t" style="left:1609.50px;top:893.85px;font-size:18.90px;color:#444;font-weight:normal;transform:scaleX(1.1211);transform-origin:0 0;-webkit-text-stroke:0.70px #444;">Fondo.jpg</span>
</body></html>
